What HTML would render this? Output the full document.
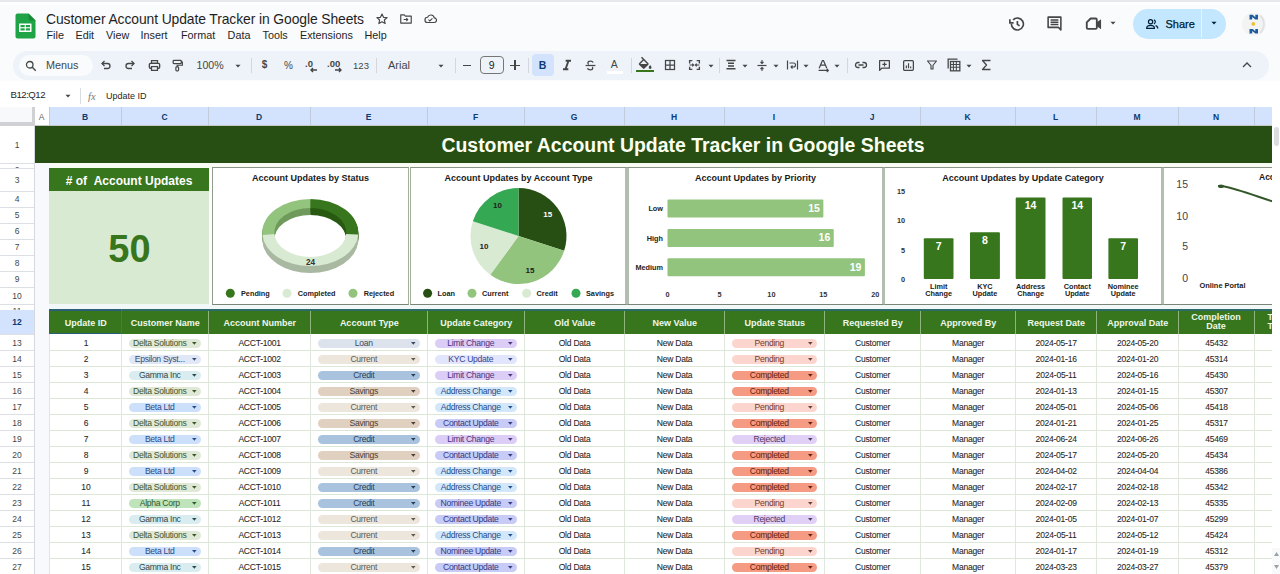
<!DOCTYPE html><html><head><meta charset="utf-8"><style>
html,body{margin:0;padding:0;}
body{width:1280px;height:574px;overflow:hidden;position:relative;background:#f9fbfd;font-family:"Liberation Sans", sans-serif;color:#1f1f1f;}
div{box-sizing:border-box;}
svg{position:absolute;overflow:visible;}
</style></head><body>

<div style="position:absolute;left:0px;top:0px;width:1280px;height:2px;background:#e6e8eb"></div>
<div style="position:absolute;left:0px;top:2px;width:1280px;height:3px;background:#fdfeff"></div>
<svg style="left:15px;top:13px" width="21" height="26" viewBox="0 0 21 26">
<path d="M2.5 0.5 H13.5 L20.5 7.5 V23.5 Q20.5 25.5 18.5 25.5 H2.5 Q0.5 25.5 0.5 23.5 V2.5 Q0.5 0.5 2.5 0.5Z" fill="#1ea446"/>
<path d="M13.5 0.5 L20.5 7.5 H15.5 Q13.5 7.5 13.5 5.5Z" fill="#178a39"/>
<rect x="4" y="10.5" width="12.5" height="8.5" fill="#fff" rx="0.5"/>
<rect x="5.5" y="12" width="4.2" height="2.2" fill="#1ea446"/><rect x="10.8" y="12" width="4.2" height="2.2" fill="#1ea446"/>
<rect x="5.5" y="15.3" width="4.2" height="2.2" fill="#1ea446"/><rect x="10.8" y="15.3" width="4.2" height="2.2" fill="#1ea446"/>
</svg>
<div style="position:absolute;left:46px;top:5.700000000000001px;height:27.8px;line-height:27.8px;white-space:nowrap;font-size:13.9px;color:#1f1f1f;letter-spacing:-0.1px">Customer Account Update Tracker in Google Sheets</div>
<svg style="left:375px;top:12px" width="14" height="14" viewBox="0 0 24 24"><path d="M12 3.5l2.6 5.6 6.1.6-4.6 4.1 1.3 6-5.4-3.1-5.4 3.1 1.3-6-4.6-4.1 6.1-.6z" fill="none" stroke="#444746" stroke-width="2" stroke-linejoin="round"/></svg>
<svg style="left:399px;top:12px" width="14" height="14" viewBox="0 0 24 24"><path d="M3 5h6l2 2h10v12H3z" fill="none" stroke="#444746" stroke-width="2" stroke-linejoin="round"/><path d="M8 13h7M12.5 10.5l2.5 2.5-2.5 2.5" fill="none" stroke="#444746" stroke-width="1.8"/></svg>
<svg style="left:423px;top:12px" width="15" height="14" viewBox="0 0 24 24"><path d="M7 18h11a4 4 0 0 0 0.5-8A6 6 0 0 0 7 9a4.5 4.5 0 0 0 0 9z" fill="none" stroke="#444746" stroke-width="2"/><path d="M8.5 13l2.3 2.3 4.5-4.5" fill="none" stroke="#444746" stroke-width="1.8"/></svg>
<div style="position:absolute;left:46.5px;top:25.2px;height:21.6px;line-height:21.6px;white-space:nowrap;font-size:10.8px;color:#1f1f1f">File</div>
<div style="position:absolute;left:75.5px;top:25.2px;height:21.6px;line-height:21.6px;white-space:nowrap;font-size:10.8px;color:#1f1f1f">Edit</div>
<div style="position:absolute;left:106px;top:25.2px;height:21.6px;line-height:21.6px;white-space:nowrap;font-size:10.8px;color:#1f1f1f">View</div>
<div style="position:absolute;left:140.6px;top:25.2px;height:21.6px;line-height:21.6px;white-space:nowrap;font-size:10.8px;color:#1f1f1f">Insert</div>
<div style="position:absolute;left:181px;top:25.2px;height:21.6px;line-height:21.6px;white-space:nowrap;font-size:10.8px;color:#1f1f1f">Format</div>
<div style="position:absolute;left:227.6px;top:25.2px;height:21.6px;line-height:21.6px;white-space:nowrap;font-size:10.8px;color:#1f1f1f">Data</div>
<div style="position:absolute;left:262.5px;top:25.2px;height:21.6px;line-height:21.6px;white-space:nowrap;font-size:10.8px;color:#1f1f1f">Tools</div>
<div style="position:absolute;left:300px;top:25.2px;height:21.6px;line-height:21.6px;white-space:nowrap;font-size:10.8px;color:#1f1f1f">Extensions</div>
<div style="position:absolute;left:364.5px;top:25.2px;height:21.6px;line-height:21.6px;white-space:nowrap;font-size:10.8px;color:#1f1f1f">Help</div>
<svg style="left:1008px;top:15px" width="18" height="18" viewBox="0 0 24 24"><path d="M4.5 12a8 8 0 1 0 2.3-5.6" fill="none" stroke="#444746" stroke-width="2.2"/><path d="M2.5 5.5v5h5" fill="none" stroke="#444746" stroke-width="2.2"/><path d="M12.5 8v4.5l3 2" fill="none" stroke="#444746" stroke-width="2.2"/></svg>
<svg style="left:1046px;top:15px" width="17" height="17" viewBox="0 0 24 24"><path d="M3 3h18v18l-3.5-3.5H3z" fill="none" stroke="#444746" stroke-width="2.2" stroke-linejoin="round"/><path d="M6.5 7h11M6.5 10.2h11M6.5 13.4h11" stroke="#444746" stroke-width="1.9"/></svg>
<svg style="left:1085px;top:15px" width="19" height="17" viewBox="0 0 24 22"><path d="M7 4.5h6.5a1.5 1.5 0 0 1 1.5 1.5v10.5a1.5 1.5 0 0 1-1.5 1.5H3.5A1.5 1.5 0 0 1 2 16.5V9.5z" fill="none" stroke="#444746" stroke-width="2.4" stroke-linejoin="round"/><path d="M15 9.5l5.5-4v13l-5.5-4z" fill="#444746"/></svg>
<svg style="left:1109px;top:21px" width="8" height="5" viewBox="-1 -0.5 10 6"><path d="M0.8 0.3h6.4L4 3.6z" fill="#444746"/></svg>
<div style="position:absolute;left:1133px;top:8.5px;width:93px;height:30px;background:#c2e7ff;border-radius:15px"></div>
<div style="position:absolute;left:1200.5px;top:9px;width:1px;height:29px;background:#e8f4fd"></div>
<svg style="left:1146.3px;top:18.5px" width="13" height="10" viewBox="1 1 23 18"><circle cx="9" cy="6" r="3.8" fill="none" stroke="#001d35" stroke-width="2.2"/><path d="M2 18c0-4 3.5-5.5 7-5.5s7 1.5 7 5.5z" fill="none" stroke="#001d35" stroke-width="2.2"/><path d="M15 2.5a3.8 3.8 0 0 1 0 7.2M18 12.8c2.5.6 4 2.2 4 5.2" fill="none" stroke="#001d35" stroke-width="2.2"/></svg>
<div style="position:absolute;left:1165.5px;top:12.5px;height:22px;line-height:22px;white-space:nowrap;font-size:11px;color:#001d35;-webkit-text-stroke:0.25px #001d35">Share</div>
<svg style="left:1210px;top:21px" width="8" height="5" viewBox="-1 -0.5 10 6"><path d="M0.8 0.3h6.4L4 3.6z" fill="#001d35"/></svg>
<svg style="left:1240px;top:10px" width="28" height="28" viewBox="0 0 28 28"><circle cx="14" cy="14.2" r="11.8" fill="#f3f3f3"/><path d="M20 5.5a11.8 11.8 0 0 1 0 17.4" fill="none" stroke="#e2e2e4" stroke-width="2"/>
<path d="M9.5,4.8 h3.2 l2.6,2.4 v-2.4 h2.7 v4.7 h-2.6 l-3.2,-2.6 v2.6 h-2.7z" fill="#1d5a9e"/>
<path d="M9.5,18.9 h3.2 l2.6,2.4 v-2.4 h2.7 v4.7 h-2.6 l-3.2,-2.6 v2.6 h-2.7z" fill="#1d5a9e"/>
<circle cx="13.3" cy="13.9" r="1.9" fill="#eac23a"/></svg>
<div style="position:absolute;left:12.5px;top:50.5px;width:1256px;height:29px;background:#eef3fa;border-radius:15px"></div>
<div style="position:absolute;left:18.5px;top:55px;width:74.5px;height:21px;background:#f9fbfd;border-radius:11px"></div>
<svg style="left:25px;top:59.5px" width="12" height="12" viewBox="0 0 24 24"><circle cx="9.5" cy="9.5" r="6.5" fill="none" stroke="#444746" stroke-width="2.6"/><path d="M14.5 14.5l7 7" stroke="#444746" stroke-width="2.8"/></svg>
<div style="position:absolute;left:46px;top:54.7px;height:21.6px;line-height:21.6px;white-space:nowrap;font-size:10.8px;color:#444746">Menus</div>
<svg style="left:100px;top:59px" width="12" height="12" viewBox="0 0 24 24"><path d="M5 9h10a5 5 0 0 1 0 10H8" fill="none" stroke="#444746" stroke-width="2.6"/><path d="M9 4L4 9l5 5" fill="none" stroke="#444746" stroke-width="2.6"/></svg>
<svg style="left:124px;top:59px" width="12" height="12" viewBox="0 0 24 24"><path d="M19 9H9a5 5 0 0 0 0 10h7" fill="none" stroke="#444746" stroke-width="2.6"/><path d="M15 4l5 5-5 5" fill="none" stroke="#444746" stroke-width="2.6"/></svg>
<svg style="left:147.5px;top:58.5px" width="13" height="13" viewBox="0 0 24 24"><rect x="2.5" y="8" width="19" height="9" rx="2" fill="none" stroke="#444746" stroke-width="2.5"/><rect x="6.5" y="3" width="11" height="5" fill="none" stroke="#444746" stroke-width="2.3"/><rect x="6.5" y="14" width="11" height="7" fill="#edf2fa" stroke="#444746" stroke-width="2.3"/></svg>
<svg style="left:171px;top:58.5px" width="13" height="13" viewBox="0 0 24 24"><rect x="4" y="2.5" width="15" height="6" rx="1.5" fill="none" stroke="#444746" stroke-width="2.4"/><path d="M19 5.5h2v6H11.5v3" fill="none" stroke="#444746" stroke-width="2.2"/><rect x="9" y="14.5" width="5" height="7.5" rx="1.5" fill="none" stroke="#444746" stroke-width="2.2"/></svg>
<div style="position:absolute;left:196.5px;top:54.9px;height:21.2px;line-height:21.2px;white-space:nowrap;font-size:10.6px;color:#444746">100%</div>
<svg style="left:233.5px;top:63.5px" width="8" height="5" viewBox="-1 -0.5 10 6"><path d="M0.8 0.3h6.4L4 3.6z" fill="#444746"/></svg>
<div style="position:absolute;left:250.5px;top:58px;width:1px;height:15px;background:#d3d6da"></div>
<div style="position:absolute;left:375.5px;top:58px;width:1px;height:15px;background:#d3d6da"></div>
<div style="position:absolute;left:455px;top:58px;width:1px;height:15px;background:#d3d6da"></div>
<div style="position:absolute;left:528px;top:58px;width:1px;height:15px;background:#d3d6da"></div>
<div style="position:absolute;left:630.5px;top:58px;width:1px;height:15px;background:#d3d6da"></div>
<div style="position:absolute;left:718.5px;top:58px;width:1px;height:15px;background:#d3d6da"></div>
<div style="position:absolute;left:846.5px;top:58px;width:1px;height:15px;background:#d3d6da"></div>
<div style="position:absolute;left:114.5px;top:55px;width:300px;height:20px;line-height:20px;text-align:center;white-space:nowrap;font-size:10px;color:#444746;font-weight:bold">$</div>
<div style="position:absolute;left:138.5px;top:55.5px;width:300px;height:20px;line-height:20px;text-align:center;white-space:nowrap;font-size:10px;color:#444746">%</div>
<svg style="left:304px;top:57px" width="16" height="16" viewBox="0 0 16 16"><text x="1" y="10" font-family="Liberation Sans" font-size="9.5" font-weight="bold" fill="#444746">.0</text><path d="M13 13H7M9 11l-2 2 2 2" fill="none" stroke="#444746" stroke-width="1.4"/></svg>
<svg style="left:327px;top:57px" width="18" height="16" viewBox="0 0 18 16"><text x="0" y="10" font-family="Liberation Sans" font-size="9.5" font-weight="bold" fill="#444746">.00</text><path d="M8 13h6M12 11l2 2-2 2" fill="none" stroke="#444746" stroke-width="1.4"/></svg>
<div style="position:absolute;left:211.0px;top:56.0px;width:300px;height:19.0px;line-height:19.0px;text-align:center;white-space:nowrap;font-size:9.5px;color:#444746">123</div>
<div style="position:absolute;left:388px;top:54px;height:22px;line-height:22px;white-space:nowrap;font-size:11px;color:#444746">Arial</div>
<svg style="left:437px;top:63.5px" width="8" height="5" viewBox="-1 -0.5 10 6"><path d="M0.8 0.3h6.4L4 3.6z" fill="#444746"/></svg>
<div style="position:absolute;left:463px;top:64.5px;width:8px;height:1.5px;background:#444746"></div>
<div style="position:absolute;left:479.5px;top:56px;width:24.5px;height:17.5px;border:1px solid #747775;border-radius:4px"></div>
<div style="position:absolute;left:341.75px;top:54.5px;width:300px;height:21.0px;line-height:21.0px;text-align:center;white-space:nowrap;font-size:10.5px;color:#1f1f1f">9</div>
<div style="position:absolute;left:510px;top:64.6px;width:10px;height:1.3px;background:#444746"></div>
<div style="position:absolute;left:514.35px;top:59.9px;width:1.3px;height:10px;background:#444746"></div>
<div style="position:absolute;left:531.5px;top:54px;width:22px;height:21.5px;background:#d3e3fd;border-radius:4px"></div>
<div style="position:absolute;left:392.5px;top:54.5px;width:300px;height:21.0px;line-height:21.0px;text-align:center;white-space:nowrap;font-size:10.5px;color:#0b3a78;font-weight:bold">B</div>
<svg style="left:560.5px;top:59px" width="12" height="12" viewBox="3 3 18 18"><path d="M10 4v3h2.21l-3.42 10H6v3h8v-3h-2.21l3.42-10H18V4z" fill="#444746"/></svg>
<svg style="left:583.5px;top:58.5px" width="13" height="13" viewBox="0 0 24 24"><path d="M17 6.5c-.8-1.6-2.5-2.5-5-2.5-3 0-4.8 1.5-4.8 3.4 0 1.2.6 2 1.6 2.6M15.2 14.5c.6.5.9 1.2.9 2 0 2-1.8 3.5-4.5 3.5-2.6 0-4.5-1-5.3-2.8" fill="none" stroke="#444746" stroke-width="2.3"/><path d="M3 12h18" stroke="#444746" stroke-width="2.3"/></svg>
<div style="position:absolute;left:464.29999999999995px;top:53.5px;width:300px;height:21.0px;line-height:21.0px;text-align:center;white-space:nowrap;font-size:10.5px;color:#444746">A</div>
<div style="position:absolute;left:606.5px;top:71px;width:16px;height:2.5px;background:#ffffff"></div>
<svg style="left:637.5px;top:55.5px" width="15" height="13" viewBox="2 -1 21 18"><path d="M16.56 8.94L7.62 0 6.21 1.41l2.38 2.38-5.15 5.15c-.59.59-.59 1.54 0 2.12l5.5 5.5c.29.29.68.44 1.06.44s.77-.15 1.06-.44l5.5-5.5c.59-.58.59-1.53 0-2.12zM5.21 10L10 5.21 14.79 10H5.21zM19 11.5s-2 2.17-2 3.5c0 1.1.9 2 2 2s2-.9 2-2c0-1.330-2-3.5-2-3.5z" fill="#444746"/></svg>
<div style="position:absolute;left:635.5px;top:69.5px;width:18px;height:2.5px;background:#38761d"></div>
<svg style="left:664px;top:59px" width="12" height="12" viewBox="0 0 24 24"><rect x="3" y="3" width="18" height="18" fill="none" stroke="#444746" stroke-width="2.5"/><path d="M12 3v18M3 12h18" stroke="#444746" stroke-width="2.5"/></svg>
<svg style="left:688px;top:59px" width="13" height="12" viewBox="0 0 24 22"><path d="M3 8V3h5M16 3h5v5M3 14v5h5M16 19h5v-5" fill="none" stroke="#444746" stroke-width="2.5"/><path d="M3 11h7M8 8.5l2.5 2.5L8 13.5M21 11h-7M16 8.5L13.5 11l2.5 2.5" fill="none" stroke="#444746" stroke-width="2"/></svg>
<svg style="left:707px;top:63.5px" width="8" height="5" viewBox="-1 -0.5 10 6"><path d="M0.8 0.3h6.4L4 3.6z" fill="#444746"/></svg>
<svg style="left:725px;top:59px" width="12" height="12" viewBox="0 0 24 24"><path d="M3 3h18M6 8.5h12M6 14h12M3 19.5h18" stroke="#444746" stroke-width="3"/></svg>
<svg style="left:741px;top:63.5px" width="8" height="5" viewBox="-1 -0.5 10 6"><path d="M0.8 0.3h6.4L4 3.6z" fill="#444746"/></svg>
<svg style="left:756px;top:58.5px" width="12" height="13" viewBox="0 0 24 26"><path d="M3 13h18" stroke="#444746" stroke-width="2.4"/><path d="M12 2v7M9 6l3 3 3-3M12 24v-7M9 20l3-3 3 3" fill="none" stroke="#444746" stroke-width="2.2"/></svg>
<svg style="left:772px;top:63.5px" width="8" height="5" viewBox="-1 -0.5 10 6"><path d="M0.8 0.3h6.4L4 3.6z" fill="#444746"/></svg>
<svg style="left:786px;top:59px" width="13" height="12" viewBox="0 0 26 24"><path d="M3 3v18M23 3v18" stroke="#444746" stroke-width="2.4"/><path d="M7 8h8a4 4 0 0 1 0 8h-4M13 13l-3 3 3 3" fill="none" stroke="#444746" stroke-width="2.2"/></svg>
<svg style="left:802px;top:63.5px" width="8" height="5" viewBox="-1 -0.5 10 6"><path d="M0.8 0.3h6.4L4 3.6z" fill="#444746"/></svg>
<svg style="left:817px;top:58.5px" width="13" height="13" viewBox="0 0 24 24"><path d="M4 17L10 3h2l6 14M6.5 11.5h9" fill="none" stroke="#444746" stroke-width="2.3"/><path d="M3 21h18M18 18l3 3-3 3" fill="none" stroke="#444746" stroke-width="2"/></svg>
<svg style="left:833px;top:63.5px" width="8" height="5" viewBox="-1 -0.5 10 6"><path d="M0.8 0.3h6.4L4 3.6z" fill="#444746"/></svg>
<svg style="left:853.5px;top:59px" width="14" height="12" viewBox="0 0 28 24"><path d="M11 7H8a5 5 0 0 0 0 10h3M17 7h3a5 5 0 0 1 0 10h-3M9 12h10" fill="none" stroke="#444746" stroke-width="2.6"/></svg>
<svg style="left:878px;top:58.5px" width="13" height="13" viewBox="0 0 24 24"><path d="M3 3h18v14H7l-4 4z" fill="none" stroke="#444746" stroke-width="2.3" stroke-linejoin="round"/><path d="M12 6v8M8 10h8" stroke="#444746" stroke-width="2.2"/></svg>
<svg style="left:901.5px;top:58.5px" width="13" height="13" viewBox="0 0 24 24"><rect x="3" y="3" width="18" height="18" rx="2" fill="none" stroke="#444746" stroke-width="2.3"/><path d="M8 17v-5M12 17V8M16 17v-3" stroke="#444746" stroke-width="2.2"/></svg>
<svg style="left:926px;top:59px" width="12" height="12" viewBox="0 0 24 24"><path d="M3 4h18l-7 8.5V20h-4v-7.5z" fill="none" stroke="#444746" stroke-width="2.3" stroke-linejoin="round"/></svg>
<svg style="left:947px;top:58px" width="14" height="14" viewBox="0 0 24 24"><rect x="6" y="6" width="16" height="16" fill="none" stroke="#444746" stroke-width="2.2"/><path d="M6 11h16M6 16h16M11 6v16M16 6v16" stroke="#444746" stroke-width="1.8"/><path d="M2 18V2h16" fill="none" stroke="#444746" stroke-width="2.2"/></svg>
<svg style="left:964.5px;top:63.5px" width="8" height="5" viewBox="-1 -0.5 10 6"><path d="M0.8 0.3h6.4L4 3.6z" fill="#444746"/></svg>
<svg style="left:981px;top:59px" width="11" height="12" viewBox="0 0 22 24"><path d="M19 3H3l8 9-8 9h16" fill="none" stroke="#444746" stroke-width="2.6" stroke-linejoin="round"/></svg>
<svg style="left:1242px;top:61px" width="10" height="7" viewBox="0 0 20 14"><path d="M2 12l8-8 8 8" fill="none" stroke="#444746" stroke-width="2.6"/></svg>
<div style="position:absolute;left:0px;top:81px;width:1280px;height:26px;background:#ffffff"></div>
<div style="position:absolute;left:10.6px;top:85.4px;height:19.2px;line-height:19.2px;white-space:nowrap;font-size:9.6px;color:#1f1f1f;letter-spacing:-0.5px">B12:Q12</div>
<svg style="left:63.5px;top:94px" width="8" height="5" viewBox="-1 -0.5 10 6"><path d="M0.8 0.3h6.4L4 3.6z" fill="#444746"/></svg>
<div style="position:absolute;left:79.5px;top:88px;width:1px;height:16px;background:#dadce0"></div>
<div style="position:absolute;left:88px;top:86.0px;height:21.0px;line-height:21.0px;white-space:nowrap;font-size:10.5px;color:#7a7a7a;font-family:'Liberation Serif'"><i>fx</i></div>
<div style="position:absolute;left:106px;top:87px;height:18px;line-height:18px;white-space:nowrap;font-size:9px;color:#1f1f1f">Update ID</div>
<div style="position:absolute;left:0px;top:107px;width:1272px;height:467px;background:#ffffff"></div>
<div style="position:absolute;left:0px;top:107px;width:1272px;height:19px;background:#ffffff"></div>
<div style="position:absolute;left:49px;top:107px;width:1223px;height:19px;background:#d3e3fd"></div>
<div style="position:absolute;left:34px;top:107px;width:15px;height:19px;background:#ffffff"></div>
<div style="position:absolute;left:-108.5px;top:108.5px;width:300px;height:17.0px;line-height:17.0px;text-align:center;white-space:nowrap;font-size:8.5px;color:#5f6368;font-weight:normal">A</div>
<div style="position:absolute;left:49px;top:107px;width:1px;height:19px;background:#c2cbdb"></div>
<div style="position:absolute;left:-65.0px;top:108.5px;width:300px;height:17.0px;line-height:17.0px;text-align:center;white-space:nowrap;font-size:8.5px;color:#0b3a6f;font-weight:bold">B</div>
<div style="position:absolute;left:121px;top:107px;width:1px;height:19px;background:#c2cbdb"></div>
<div style="position:absolute;left:14.5px;top:108.5px;width:300px;height:17.0px;line-height:17.0px;text-align:center;white-space:nowrap;font-size:8.5px;color:#0b3a6f;font-weight:bold">C</div>
<div style="position:absolute;left:208px;top:107px;width:1px;height:19px;background:#c2cbdb"></div>
<div style="position:absolute;left:109.0px;top:108.5px;width:300px;height:17.0px;line-height:17.0px;text-align:center;white-space:nowrap;font-size:8.5px;color:#0b3a6f;font-weight:bold">D</div>
<div style="position:absolute;left:310px;top:107px;width:1px;height:19px;background:#c2cbdb"></div>
<div style="position:absolute;left:218.5px;top:108.5px;width:300px;height:17.0px;line-height:17.0px;text-align:center;white-space:nowrap;font-size:8.5px;color:#0b3a6f;font-weight:bold">E</div>
<div style="position:absolute;left:427px;top:107px;width:1px;height:19px;background:#c2cbdb"></div>
<div style="position:absolute;left:325.5px;top:108.5px;width:300px;height:17.0px;line-height:17.0px;text-align:center;white-space:nowrap;font-size:8.5px;color:#0b3a6f;font-weight:bold">F</div>
<div style="position:absolute;left:524px;top:107px;width:1px;height:19px;background:#c2cbdb"></div>
<div style="position:absolute;left:424.0px;top:108.5px;width:300px;height:17.0px;line-height:17.0px;text-align:center;white-space:nowrap;font-size:8.5px;color:#0b3a6f;font-weight:bold">G</div>
<div style="position:absolute;left:624px;top:107px;width:1px;height:19px;background:#c2cbdb"></div>
<div style="position:absolute;left:524.0px;top:108.5px;width:300px;height:17.0px;line-height:17.0px;text-align:center;white-space:nowrap;font-size:8.5px;color:#0b3a6f;font-weight:bold">H</div>
<div style="position:absolute;left:724px;top:107px;width:1px;height:19px;background:#c2cbdb"></div>
<div style="position:absolute;left:624.0px;top:108.5px;width:300px;height:17.0px;line-height:17.0px;text-align:center;white-space:nowrap;font-size:8.5px;color:#0b3a6f;font-weight:bold">I</div>
<div style="position:absolute;left:824px;top:107px;width:1px;height:19px;background:#c2cbdb"></div>
<div style="position:absolute;left:722.0px;top:108.5px;width:300px;height:17.0px;line-height:17.0px;text-align:center;white-space:nowrap;font-size:8.5px;color:#0b3a6f;font-weight:bold">J</div>
<div style="position:absolute;left:920px;top:107px;width:1px;height:19px;background:#c2cbdb"></div>
<div style="position:absolute;left:817.5px;top:108.5px;width:300px;height:17.0px;line-height:17.0px;text-align:center;white-space:nowrap;font-size:8.5px;color:#0b3a6f;font-weight:bold">K</div>
<div style="position:absolute;left:1015px;top:107px;width:1px;height:19px;background:#c2cbdb"></div>
<div style="position:absolute;left:905.5px;top:108.5px;width:300px;height:17.0px;line-height:17.0px;text-align:center;white-space:nowrap;font-size:8.5px;color:#0b3a6f;font-weight:bold">L</div>
<div style="position:absolute;left:1096px;top:107px;width:1px;height:19px;background:#c2cbdb"></div>
<div style="position:absolute;left:987.0px;top:108.5px;width:300px;height:17.0px;line-height:17.0px;text-align:center;white-space:nowrap;font-size:8.5px;color:#0b3a6f;font-weight:bold">M</div>
<div style="position:absolute;left:1178px;top:107px;width:1px;height:19px;background:#c2cbdb"></div>
<div style="position:absolute;left:1066.0px;top:108.5px;width:300px;height:17.0px;line-height:17.0px;text-align:center;white-space:nowrap;font-size:8.5px;color:#0b3a6f;font-weight:bold">N</div>
<div style="position:absolute;left:1254px;top:107px;width:1px;height:19px;background:#c2cbdb"></div>
<div style="position:absolute;left:0px;top:125px;width:1272px;height:1px;background:#c4c7c5"></div>
<div style="position:absolute;left:0px;top:107px;width:34px;height:19px;background:#f8f9fa"></div>
<div style="position:absolute;left:31.5px;top:107px;width:3.5px;height:19px;background:#cfd1d4"></div>
<div style="position:absolute;left:0px;top:122px;width:35px;height:4px;background:#cfd1d4"></div>
<div style="position:absolute;left:0px;top:126px;width:34px;height:448px;background:#ffffff"></div>
<div style="position:absolute;left:0px;top:163px;width:34px;height:1px;background:#dcdfe3"></div>
<div style="position:absolute;left:-133.0px;top:136.8px;width:300px;height:17.0px;line-height:17.0px;text-align:center;white-space:nowrap;font-size:8.5px;color:#444746;font-weight:normal">1</div>
<div style="position:absolute;left:0px;top:168px;width:34px;height:1px;background:#dcdfe3"></div>
<div style="position:absolute;left:0;top:163px;width:34px;height:5px;overflow:hidden"><div style="position:absolute;left:-133.0px;top:-1.4000000000000004px;width:300px;height:17.0px;line-height:17.0px;text-align:center;white-space:nowrap;font-size:8.5px;color:#444746">2</div></div>
<div style="position:absolute;left:0px;top:191px;width:34px;height:1px;background:#dcdfe3"></div>
<div style="position:absolute;left:-133.0px;top:171.8px;width:300px;height:17.0px;line-height:17.0px;text-align:center;white-space:nowrap;font-size:8.5px;color:#444746;font-weight:normal">3</div>
<div style="position:absolute;left:0px;top:207px;width:34px;height:1px;background:#dcdfe3"></div>
<div style="position:absolute;left:-133.0px;top:191.3px;width:300px;height:17.0px;line-height:17.0px;text-align:center;white-space:nowrap;font-size:8.5px;color:#444746;font-weight:normal">4</div>
<div style="position:absolute;left:0px;top:223px;width:34px;height:1px;background:#dcdfe3"></div>
<div style="position:absolute;left:-133.0px;top:207.3px;width:300px;height:17.0px;line-height:17.0px;text-align:center;white-space:nowrap;font-size:8.5px;color:#444746;font-weight:normal">5</div>
<div style="position:absolute;left:0px;top:239px;width:34px;height:1px;background:#dcdfe3"></div>
<div style="position:absolute;left:-133.0px;top:223.3px;width:300px;height:17.0px;line-height:17.0px;text-align:center;white-space:nowrap;font-size:8.5px;color:#444746;font-weight:normal">6</div>
<div style="position:absolute;left:0px;top:255px;width:34px;height:1px;background:#dcdfe3"></div>
<div style="position:absolute;left:-133.0px;top:239.3px;width:300px;height:17.0px;line-height:17.0px;text-align:center;white-space:nowrap;font-size:8.5px;color:#444746;font-weight:normal">7</div>
<div style="position:absolute;left:0px;top:271px;width:34px;height:1px;background:#dcdfe3"></div>
<div style="position:absolute;left:-133.0px;top:255.3px;width:300px;height:17.0px;line-height:17.0px;text-align:center;white-space:nowrap;font-size:8.5px;color:#444746;font-weight:normal">8</div>
<div style="position:absolute;left:0px;top:287px;width:34px;height:1px;background:#dcdfe3"></div>
<div style="position:absolute;left:-133.0px;top:271.3px;width:300px;height:17.0px;line-height:17.0px;text-align:center;white-space:nowrap;font-size:8.5px;color:#444746;font-weight:normal">9</div>
<div style="position:absolute;left:0px;top:304px;width:34px;height:1px;background:#dcdfe3"></div>
<div style="position:absolute;left:-133.0px;top:287.8px;width:300px;height:17.0px;line-height:17.0px;text-align:center;white-space:nowrap;font-size:8.5px;color:#444746;font-weight:normal">10</div>
<div style="position:absolute;left:0px;top:310px;width:34px;height:1px;background:#dcdfe3"></div>
<div style="position:absolute;left:0;top:304px;width:34px;height:6px;overflow:hidden"><div style="position:absolute;left:-133.0px;top:-0.9000000000000004px;width:300px;height:17.0px;line-height:17.0px;text-align:center;white-space:nowrap;font-size:8.5px;color:#444746">11</div></div>
<div style="position:absolute;left:0px;top:310px;width:34px;height:24px;background:#d3e3fd"></div>
<div style="position:absolute;left:0px;top:334px;width:34px;height:1px;background:#dcdfe3"></div>
<div style="position:absolute;left:-133.0px;top:314.3px;width:300px;height:17.0px;line-height:17.0px;text-align:center;white-space:nowrap;font-size:8.5px;color:#0b3a6f;font-weight:bold">12</div>
<div style="position:absolute;left:0px;top:350px;width:34px;height:1px;background:#dcdfe3"></div>
<div style="position:absolute;left:-133.0px;top:335.1px;width:300px;height:17.0px;line-height:17.0px;text-align:center;white-space:nowrap;font-size:8.5px;color:#444746;font-weight:normal">13</div>
<div style="position:absolute;left:0px;top:366px;width:34px;height:1px;background:#dcdfe3"></div>
<div style="position:absolute;left:-133.0px;top:351.1px;width:300px;height:17.0px;line-height:17.0px;text-align:center;white-space:nowrap;font-size:8.5px;color:#444746;font-weight:normal">14</div>
<div style="position:absolute;left:0px;top:382px;width:34px;height:1px;background:#dcdfe3"></div>
<div style="position:absolute;left:-133.0px;top:367.1px;width:300px;height:17.0px;line-height:17.0px;text-align:center;white-space:nowrap;font-size:8.5px;color:#444746;font-weight:normal">15</div>
<div style="position:absolute;left:0px;top:398px;width:34px;height:1px;background:#dcdfe3"></div>
<div style="position:absolute;left:-133.0px;top:383.1px;width:300px;height:17.0px;line-height:17.0px;text-align:center;white-space:nowrap;font-size:8.5px;color:#444746;font-weight:normal">16</div>
<div style="position:absolute;left:0px;top:414px;width:34px;height:1px;background:#dcdfe3"></div>
<div style="position:absolute;left:-133.0px;top:399.1px;width:300px;height:17.0px;line-height:17.0px;text-align:center;white-space:nowrap;font-size:8.5px;color:#444746;font-weight:normal">17</div>
<div style="position:absolute;left:0px;top:430px;width:34px;height:1px;background:#dcdfe3"></div>
<div style="position:absolute;left:-133.0px;top:415.1px;width:300px;height:17.0px;line-height:17.0px;text-align:center;white-space:nowrap;font-size:8.5px;color:#444746;font-weight:normal">18</div>
<div style="position:absolute;left:0px;top:446px;width:34px;height:1px;background:#dcdfe3"></div>
<div style="position:absolute;left:-133.0px;top:431.1px;width:300px;height:17.0px;line-height:17.0px;text-align:center;white-space:nowrap;font-size:8.5px;color:#444746;font-weight:normal">19</div>
<div style="position:absolute;left:0px;top:462px;width:34px;height:1px;background:#dcdfe3"></div>
<div style="position:absolute;left:-133.0px;top:447.1px;width:300px;height:17.0px;line-height:17.0px;text-align:center;white-space:nowrap;font-size:8.5px;color:#444746;font-weight:normal">20</div>
<div style="position:absolute;left:0px;top:478px;width:34px;height:1px;background:#dcdfe3"></div>
<div style="position:absolute;left:-133.0px;top:463.1px;width:300px;height:17.0px;line-height:17.0px;text-align:center;white-space:nowrap;font-size:8.5px;color:#444746;font-weight:normal">21</div>
<div style="position:absolute;left:0px;top:494px;width:34px;height:1px;background:#dcdfe3"></div>
<div style="position:absolute;left:-133.0px;top:479.1px;width:300px;height:17.0px;line-height:17.0px;text-align:center;white-space:nowrap;font-size:8.5px;color:#444746;font-weight:normal">22</div>
<div style="position:absolute;left:0px;top:510px;width:34px;height:1px;background:#dcdfe3"></div>
<div style="position:absolute;left:-133.0px;top:495.1px;width:300px;height:17.0px;line-height:17.0px;text-align:center;white-space:nowrap;font-size:8.5px;color:#444746;font-weight:normal">23</div>
<div style="position:absolute;left:0px;top:526px;width:34px;height:1px;background:#dcdfe3"></div>
<div style="position:absolute;left:-133.0px;top:511.1px;width:300px;height:17.0px;line-height:17.0px;text-align:center;white-space:nowrap;font-size:8.5px;color:#444746;font-weight:normal">24</div>
<div style="position:absolute;left:0px;top:542px;width:34px;height:1px;background:#dcdfe3"></div>
<div style="position:absolute;left:-133.0px;top:527.1px;width:300px;height:17.0px;line-height:17.0px;text-align:center;white-space:nowrap;font-size:8.5px;color:#444746;font-weight:normal">25</div>
<div style="position:absolute;left:0px;top:558px;width:34px;height:1px;background:#dcdfe3"></div>
<div style="position:absolute;left:-133.0px;top:543.1px;width:300px;height:17.0px;line-height:17.0px;text-align:center;white-space:nowrap;font-size:8.5px;color:#444746;font-weight:normal">26</div>
<div style="position:absolute;left:0px;top:574px;width:34px;height:1px;background:#dcdfe3"></div>
<div style="position:absolute;left:-133.0px;top:559.1px;width:300px;height:17.0px;line-height:17.0px;text-align:center;white-space:nowrap;font-size:8.5px;color:#444746;font-weight:normal">27</div>
<div style="position:absolute;left:34px;top:126px;width:1px;height:448px;background:#d5d8dc"></div>
<div style="position:absolute;left:35px;top:126px;width:14px;height:448px;background:#f7f9fc"></div>
<div style="position:absolute;left:35px;top:126px;width:1237px;height:37px;background:#274e13"></div>
<div style="position:absolute;left:333.0px;top:126.05px;width:700px;height:38.9px;line-height:38.9px;text-align:center;white-space:nowrap;font-size:19.45px;color:#fbfff2;font-weight:bold">Customer Account Update Tracker in Google Sheets</div>
<div style="position:absolute;left:49px;top:163px;width:1223px;height:5px;background:#f9fcf5"></div>
<div style="position:absolute;left:49px;top:303px;width:1223px;height:7px;background:#f1f8f7"></div>
<div style="position:absolute;left:49px;top:168px;width:160px;height:23px;background:#38761d"></div>
<div style="position:absolute;left:-21.0px;top:168.8px;width:300px;height:24px;line-height:24px;text-align:center;white-space:nowrap;font-size:12px;color:#ffffff;font-weight:bold"># of &nbsp;Account Updates</div>
<div style="position:absolute;left:49px;top:191px;width:160px;height:112.5px;background:#d9ead3"></div>
<div style="position:absolute;left:-20.5px;top:211px;width:300px;height:76px;line-height:76px;text-align:center;white-space:nowrap;font-size:38px;color:#38761d;font-weight:bold">50</div>
<div style="position:absolute;left:209px;top:168px;width:1063px;height:136.5px;background:#ffffff"></div>
<div style="position:absolute;left:212px;top:167px;width:196.5px;height:138px;background:#ffffff;border-top:1px solid #8c9288;border-bottom:1px solid #7d8579;border-left:1.3px solid #8f9b8c;border-right:1px solid #a3b09e"></div>
<div style="position:absolute;left:410px;top:167px;width:217px;height:138px;background:#ffffff;border-top:1px solid #8c9288;border-bottom:1px solid #7d8579;border-left:1px solid #a3b09e;border-right:1px solid #a3b09e"></div>
<div style="position:absolute;left:627px;top:167px;width:256.5px;height:138px;background:#ffffff;border-top:1px solid #8c9288;border-bottom:1px solid #7d8579;border-left:1px solid #a3b09e;border-right:1px solid #a3b09e"></div>
<div style="position:absolute;left:883.5px;top:167px;width:279.0px;height:138px;background:#ffffff;border-top:1px solid #8c9288;border-bottom:1px solid #7d8579;border-left:1px solid #a3b09e;border-right:1px solid #a3b09e"></div>
<div style="position:absolute;left:1162.5px;top:167px;width:127.5px;height:138px;background:#ffffff;border-top:1px solid #8c9288;border-bottom:1px solid #7d8579;border-left:1px solid #a3b09e;border-right:1px solid #a3b09e"></div>
<div style="position:absolute;left:408.5px;top:163px;width:1.5px;height:142px;background:#fbfdf8"></div>
<div style="position:absolute;left:625px;top:168px;width:4px;height:136px;background:#b3bfae"></div>
<div style="position:absolute;left:882px;top:168px;width:3.2999999999999545px;height:136px;background:#b3bfae"></div>
<div style="position:absolute;left:1161px;top:168px;width:3px;height:136px;background:#b3bfae"></div>
<svg style="left:0;top:0" width="1280" height="574" viewBox="0 0 1280 574"><path d="M310.30,206.00 A48,33.5 0 0 1 358.21,241.60 L346.23,241.04 A36,24.5 0 0 0 310.30,215.00 Z" fill="#285a12"/><path d="M358.21,241.60 A48,33.5 0 0 1 262.39,241.60 L274.37,241.04 A36,24.5 0 0 0 346.23,241.04 Z" fill="#a9b9a2"/><path d="M262.39,241.60 A48,33.5 0 0 1 310.30,206.00 L310.30,215.00 A36,24.5 0 0 0 274.37,241.04 Z" fill="#6f9a5c"/><path d="M310.30,205.00 A48,33.5 0 0 1 358.21,240.60 L346.23,240.04 A36,24.5 0 0 0 310.30,214.00 Z" fill="#285a12"/><path d="M358.21,240.60 A48,33.5 0 0 1 262.39,240.60 L274.37,240.04 A36,24.5 0 0 0 346.23,240.04 Z" fill="#a9b9a2"/><path d="M262.39,240.60 A48,33.5 0 0 1 310.30,205.00 L310.30,214.00 A36,24.5 0 0 0 274.37,240.04 Z" fill="#6f9a5c"/><path d="M310.30,204.00 A48,33.5 0 0 1 358.21,239.60 L346.23,239.04 A36,24.5 0 0 0 310.30,213.00 Z" fill="#285a12"/><path d="M358.21,239.60 A48,33.5 0 0 1 262.39,239.60 L274.37,239.04 A36,24.5 0 0 0 346.23,239.04 Z" fill="#a9b9a2"/><path d="M262.39,239.60 A48,33.5 0 0 1 310.30,204.00 L310.30,213.00 A36,24.5 0 0 0 274.37,239.04 Z" fill="#6f9a5c"/><path d="M310.30,203.00 A48,33.5 0 0 1 358.21,238.60 L346.23,238.04 A36,24.5 0 0 0 310.30,212.00 Z" fill="#285a12"/><path d="M358.21,238.60 A48,33.5 0 0 1 262.39,238.60 L274.37,238.04 A36,24.5 0 0 0 346.23,238.04 Z" fill="#a9b9a2"/><path d="M262.39,238.60 A48,33.5 0 0 1 310.30,203.00 L310.30,212.00 A36,24.5 0 0 0 274.37,238.04 Z" fill="#6f9a5c"/><path d="M310.30,202.00 A48,33.5 0 0 1 358.21,237.60 L346.23,237.04 A36,24.5 0 0 0 310.30,211.00 Z" fill="#285a12"/><path d="M358.21,237.60 A48,33.5 0 0 1 262.39,237.60 L274.37,237.04 A36,24.5 0 0 0 346.23,237.04 Z" fill="#a9b9a2"/><path d="M262.39,237.60 A48,33.5 0 0 1 310.30,202.00 L310.30,211.00 A36,24.5 0 0 0 274.37,237.04 Z" fill="#6f9a5c"/><path d="M310.30,201.00 A48,33.5 0 0 1 358.21,236.60 L346.23,236.04 A36,24.5 0 0 0 310.30,210.00 Z" fill="#285a12"/><path d="M358.21,236.60 A48,33.5 0 0 1 262.39,236.60 L274.37,236.04 A36,24.5 0 0 0 346.23,236.04 Z" fill="#a9b9a2"/><path d="M262.39,236.60 A48,33.5 0 0 1 310.30,201.00 L310.30,210.00 A36,24.5 0 0 0 274.37,236.04 Z" fill="#6f9a5c"/><path d="M310.30,200.00 A48,33.5 0 0 1 358.21,235.60 L346.23,235.04 A36,24.5 0 0 0 310.30,209.00 Z" fill="#285a12"/><path d="M358.21,235.60 A48,33.5 0 0 1 262.39,235.60 L274.37,235.04 A36,24.5 0 0 0 346.23,235.04 Z" fill="#a9b9a2"/><path d="M262.39,235.60 A48,33.5 0 0 1 310.30,200.00 L310.30,209.00 A36,24.5 0 0 0 274.37,235.04 Z" fill="#6f9a5c"/><path d="M310.30,199.00 A48,33.5 0 0 1 358.21,234.60 L346.23,234.04 A36,24.5 0 0 0 310.30,208.00 Z" fill="#38761d"/><path d="M358.21,234.60 A48,33.5 0 0 1 262.39,234.60 L274.37,234.04 A36,24.5 0 0 0 346.23,234.04 Z" fill="#d9ead3"/><path d="M262.39,234.60 A48,33.5 0 0 1 310.30,199.00 L310.30,208.00 A36,24.5 0 0 0 274.37,234.04 Z" fill="#93c47d"/><text x="310.5" y="264.5" font-family="Liberation Sans" font-size="8.2" font-weight="bold" fill="#333" text-anchor="middle" >24</text><text x="310.5" y="181.3" font-family="Liberation Sans" font-size="9" font-weight="bold" fill="#1a1a1a" text-anchor="middle" >Account Updates by Status</text><circle cx="230.3" cy="293.3" r="4.5" fill="#38761d"/><text x="241.0" y="295.7" font-family="Liberation Sans" font-size="7.3" font-weight="bold" fill="#222" text-anchor="start" >Pending</text><circle cx="287" cy="293.3" r="4.5" fill="#d9ead3"/><text x="297.7" y="295.7" font-family="Liberation Sans" font-size="7.3" font-weight="bold" fill="#222" text-anchor="start" >Completed</text><circle cx="353" cy="293.3" r="4.5" fill="#93c47d"/><text x="363.7" y="295.7" font-family="Liberation Sans" font-size="7.3" font-weight="bold" fill="#222" text-anchor="start" >Rejected</text><path d="M518.5,236 L518.50,188.00 A48,48 0 0 1 564.15,250.83 Z" fill="#274e13"/><path d="M518.5,236 L564.15,250.83 A48,48 0 0 1 490.29,274.83 Z" fill="#93c47d"/><path d="M518.5,236 L490.29,274.83 A48,48 0 0 1 472.85,221.17 Z" fill="#d9ead3"/><path d="M518.5,236 L472.85,221.17 A48,48 0 0 1 518.50,188.00 Z" fill="#34a853"/><text x="547.8" y="217.2" font-family="Liberation Sans" font-size="8" font-weight="bold" fill="#ffffff" text-anchor="middle" >15</text><text x="530" y="273.2" font-family="Liberation Sans" font-size="8" font-weight="bold" fill="#222" text-anchor="middle" >15</text><text x="484" y="249.4" font-family="Liberation Sans" font-size="8" font-weight="bold" fill="#222" text-anchor="middle" >10</text><text x="497.5" y="208.4" font-family="Liberation Sans" font-size="8" font-weight="bold" fill="#222" text-anchor="middle" >10</text><text x="518.5" y="181.3" font-family="Liberation Sans" font-size="9" font-weight="bold" fill="#1a1a1a" text-anchor="middle" >Account Updates by Account Type</text><circle cx="427.6" cy="293.3" r="4.5" fill="#274e13"/><text x="437.6" y="295.7" font-family="Liberation Sans" font-size="7.3" font-weight="bold" fill="#222" text-anchor="start" >Loan</text><circle cx="472" cy="293.3" r="4.5" fill="#93c47d"/><text x="482" y="295.7" font-family="Liberation Sans" font-size="7.3" font-weight="bold" fill="#222" text-anchor="start" >Current</text><circle cx="526.6" cy="293.3" r="4.5" fill="#d9ead3"/><text x="536.6" y="295.7" font-family="Liberation Sans" font-size="7.3" font-weight="bold" fill="#222" text-anchor="start" >Credit</text><circle cx="576" cy="293.3" r="4.5" fill="#34a853"/><text x="586" y="295.7" font-family="Liberation Sans" font-size="7.3" font-weight="bold" fill="#222" text-anchor="start" >Savings</text><text x="755.5" y="181.3" font-family="Liberation Sans" font-size="9" font-weight="bold" fill="#1a1a1a" text-anchor="middle" >Account Updates by Priority</text><rect x="667.5" y="199.5" width="155.85" height="18" rx="1" fill="#93c47d"/><text x="819.85" y="211.7" font-family="Liberation Sans" font-size="10.5" font-weight="bold" fill="#ffffff" text-anchor="end" >15</text><text x="663" y="211.2" font-family="Liberation Sans" font-size="7.3" font-weight="bold" fill="#222" text-anchor="end" >Low</text><rect x="667.5" y="229" width="166.24" height="18" rx="1" fill="#93c47d"/><text x="830.24" y="241.2" font-family="Liberation Sans" font-size="10.5" font-weight="bold" fill="#ffffff" text-anchor="end" >16</text><text x="663" y="240.7" font-family="Liberation Sans" font-size="7.3" font-weight="bold" fill="#222" text-anchor="end" >High</text><rect x="667.5" y="258.3" width="197.41" height="18" rx="1" fill="#93c47d"/><text x="861.4100000000001" y="270.5" font-family="Liberation Sans" font-size="10.5" font-weight="bold" fill="#ffffff" text-anchor="end" >19</text><text x="663" y="270.0" font-family="Liberation Sans" font-size="7.3" font-weight="bold" fill="#222" text-anchor="end" >Medium</text><text x="667.5" y="296.5" font-family="Liberation Sans" font-size="7.3" font-weight="bold" fill="#333" text-anchor="middle" >0</text><text x="719.45" y="296.5" font-family="Liberation Sans" font-size="7.3" font-weight="bold" fill="#333" text-anchor="middle" >5</text><text x="771.4" y="296.5" font-family="Liberation Sans" font-size="7.3" font-weight="bold" fill="#333" text-anchor="middle" >10</text><text x="823.35" y="296.5" font-family="Liberation Sans" font-size="7.3" font-weight="bold" fill="#333" text-anchor="middle" >15</text><text x="875.3" y="296.5" font-family="Liberation Sans" font-size="7.3" font-weight="bold" fill="#333" text-anchor="middle" >20</text><text x="1023" y="181.3" font-family="Liberation Sans" font-size="9" font-weight="bold" fill="#1a1a1a" text-anchor="middle" >Account Updates by Update Category</text><rect x="923.8" y="238.19" width="29.70" height="40.81" rx="1" fill="#38761d"/><text x="938.65" y="249.79" font-family="Liberation Sans" font-size="10.5" font-weight="bold" fill="#ffffff" text-anchor="middle" >7</text><text x="938.65" y="288.8" font-family="Liberation Sans" font-size="7.3" font-weight="bold" fill="#222" text-anchor="middle" >Limit</text><text x="938.65" y="296.3" font-family="Liberation Sans" font-size="7.3" font-weight="bold" fill="#222" text-anchor="middle" >Change</text><rect x="970" y="232.36" width="29.90" height="46.64" rx="1" fill="#38761d"/><text x="984.95" y="243.96" font-family="Liberation Sans" font-size="10.5" font-weight="bold" fill="#ffffff" text-anchor="middle" >8</text><text x="984.95" y="288.8" font-family="Liberation Sans" font-size="7.3" font-weight="bold" fill="#222" text-anchor="middle" >KYC</text><text x="984.95" y="296.3" font-family="Liberation Sans" font-size="7.3" font-weight="bold" fill="#222" text-anchor="middle" >Update</text><rect x="1015.7" y="197.38" width="29.80" height="81.62" rx="1" fill="#38761d"/><text x="1030.6" y="208.98" font-family="Liberation Sans" font-size="10.5" font-weight="bold" fill="#ffffff" text-anchor="middle" >14</text><text x="1030.6" y="288.8" font-family="Liberation Sans" font-size="7.3" font-weight="bold" fill="#222" text-anchor="middle" >Address</text><text x="1030.6" y="296.3" font-family="Liberation Sans" font-size="7.3" font-weight="bold" fill="#222" text-anchor="middle" >Change</text><rect x="1062.5" y="197.38" width="29.50" height="81.62" rx="1" fill="#38761d"/><text x="1077.25" y="208.98" font-family="Liberation Sans" font-size="10.5" font-weight="bold" fill="#ffffff" text-anchor="middle" >14</text><text x="1077.25" y="288.8" font-family="Liberation Sans" font-size="7.3" font-weight="bold" fill="#222" text-anchor="middle" >Contact</text><text x="1077.25" y="296.3" font-family="Liberation Sans" font-size="7.3" font-weight="bold" fill="#222" text-anchor="middle" >Update</text><rect x="1108.4" y="238.19" width="29.60" height="40.81" rx="1" fill="#38761d"/><text x="1123.2" y="249.79" font-family="Liberation Sans" font-size="10.5" font-weight="bold" fill="#ffffff" text-anchor="middle" >7</text><text x="1123.2" y="288.8" font-family="Liberation Sans" font-size="7.3" font-weight="bold" fill="#222" text-anchor="middle" >Nominee</text><text x="1123.2" y="296.3" font-family="Liberation Sans" font-size="7.3" font-weight="bold" fill="#222" text-anchor="middle" >Update</text><text x="905" y="281.7" font-family="Liberation Sans" font-size="7.3" font-weight="bold" fill="#333" text-anchor="end" >0</text><text x="905" y="252.54999999999998" font-family="Liberation Sans" font-size="7.3" font-weight="bold" fill="#333" text-anchor="end" >5</text><text x="905" y="223.39999999999998" font-family="Liberation Sans" font-size="7.3" font-weight="bold" fill="#333" text-anchor="end" >10</text><text x="905" y="194.25" font-family="Liberation Sans" font-size="7.3" font-weight="bold" fill="#333" text-anchor="end" >15</text><text x="1188" y="188.10000000000002" font-family="Liberation Sans" font-size="10.5" font-weight="normal" fill="#444" text-anchor="end" >15</text><text x="1188" y="219.8" font-family="Liberation Sans" font-size="10.5" font-weight="normal" fill="#444" text-anchor="end" >10</text><text x="1188" y="250.3" font-family="Liberation Sans" font-size="10.5" font-weight="normal" fill="#444" text-anchor="end" >5</text><text x="1188" y="281.5" font-family="Liberation Sans" font-size="10.5" font-weight="normal" fill="#444" text-anchor="end" >0</text><text x="1222.5" y="288.2" font-family="Liberation Sans" font-size="7.4" font-weight="bold" fill="#222" text-anchor="middle" >Online Portal</text><path d="M1218,186 L1223,186.3 C1238,189 1255,196 1290,207" fill="none" stroke="#34572a" stroke-width="2"/><ellipse cx="1221" cy="186.3" rx="3" ry="1.8" fill="#34572a"/><text x="1259" y="179.5" font-family="Liberation Sans" font-size="8.5" font-weight="bold" fill="#1a1a1a" text-anchor="start" >Acc</text></svg>
<div style="position:absolute;left:1272px;top:107px;width:8px;height:467px;background:#ffffff"></div>
<div style="position:absolute;left:1273.5px;top:127px;width:5px;height:19px;background:#dadce0;border-radius:3px"></div>
<div style="position:absolute;left:49px;top:310px;width:1223px;height:24px;background:#38761d"></div>
<div style="position:absolute;left:49.8px;top:313.8px;width:72px;height:18px;line-height:18px;text-align:center;white-space:nowrap;font-size:9px;color:#eef7ea;font-weight:bold">Update ID</div>
<div style="position:absolute;left:121px;top:310px;width:1px;height:24px;background:#8fb47e"></div>
<div style="position:absolute;left:121.80000000000001px;top:313.8px;width:87px;height:18px;line-height:18px;text-align:center;white-space:nowrap;font-size:9px;color:#eef7ea;font-weight:bold">Customer Name</div>
<div style="position:absolute;left:208px;top:310px;width:1px;height:24px;background:#8fb47e"></div>
<div style="position:absolute;left:208.8px;top:313.8px;width:102px;height:18px;line-height:18px;text-align:center;white-space:nowrap;font-size:9px;color:#eef7ea;font-weight:bold">Account Number</div>
<div style="position:absolute;left:310px;top:310px;width:1px;height:24px;background:#8fb47e"></div>
<div style="position:absolute;left:310.8px;top:313.8px;width:117px;height:18px;line-height:18px;text-align:center;white-space:nowrap;font-size:9px;color:#eef7ea;font-weight:bold">Account Type</div>
<div style="position:absolute;left:427px;top:310px;width:1px;height:24px;background:#8fb47e"></div>
<div style="position:absolute;left:427.8px;top:313.8px;width:97px;height:18px;line-height:18px;text-align:center;white-space:nowrap;font-size:9px;color:#eef7ea;font-weight:bold">Update Category</div>
<div style="position:absolute;left:524px;top:310px;width:1px;height:24px;background:#8fb47e"></div>
<div style="position:absolute;left:524.8px;top:313.8px;width:100px;height:18px;line-height:18px;text-align:center;white-space:nowrap;font-size:9px;color:#eef7ea;font-weight:bold">Old Value</div>
<div style="position:absolute;left:624px;top:310px;width:1px;height:24px;background:#8fb47e"></div>
<div style="position:absolute;left:624.8px;top:313.8px;width:100px;height:18px;line-height:18px;text-align:center;white-space:nowrap;font-size:9px;color:#eef7ea;font-weight:bold">New Value</div>
<div style="position:absolute;left:724px;top:310px;width:1px;height:24px;background:#8fb47e"></div>
<div style="position:absolute;left:724.8px;top:313.8px;width:100px;height:18px;line-height:18px;text-align:center;white-space:nowrap;font-size:9px;color:#eef7ea;font-weight:bold">Update Status</div>
<div style="position:absolute;left:824px;top:310px;width:1px;height:24px;background:#8fb47e"></div>
<div style="position:absolute;left:824.8px;top:313.8px;width:96px;height:18px;line-height:18px;text-align:center;white-space:nowrap;font-size:9px;color:#eef7ea;font-weight:bold">Requested By</div>
<div style="position:absolute;left:920px;top:310px;width:1px;height:24px;background:#8fb47e"></div>
<div style="position:absolute;left:920.8px;top:313.8px;width:95px;height:18px;line-height:18px;text-align:center;white-space:nowrap;font-size:9px;color:#eef7ea;font-weight:bold">Approved By</div>
<div style="position:absolute;left:1015px;top:310px;width:1px;height:24px;background:#8fb47e"></div>
<div style="position:absolute;left:1015.8px;top:313.8px;width:81px;height:18px;line-height:18px;text-align:center;white-space:nowrap;font-size:9px;color:#eef7ea;font-weight:bold">Request Date</div>
<div style="position:absolute;left:1096px;top:310px;width:1px;height:24px;background:#8fb47e"></div>
<div style="position:absolute;left:1096.8px;top:313.8px;width:82px;height:18px;line-height:18px;text-align:center;white-space:nowrap;font-size:9px;color:#eef7ea;font-weight:bold">Approval Date</div>
<div style="position:absolute;left:1178px;top:310px;width:1px;height:24px;background:#8fb47e"></div>
<div style="position:absolute;left:1178px;top:312.5px;width:76px;text-align:center;font-size:9px;line-height:9.8px;font-weight:bold;color:#eef7ea">Completion<br>Date</div>
<div style="position:absolute;left:1254px;top:310px;width:1px;height:24px;background:#8fb47e"></div>
<div style="position:absolute;left:1267.5px;top:312.5px;width:20px;font-size:9px;line-height:9.8px;font-weight:bold;color:#eef7ea">T<br>T</div>
<div style="position:absolute;left:49px;top:309px;width:1223px;height:1.5px;background:#2f6a6a"></div>
<div style="position:absolute;left:49px;top:309px;width:72px;height:1.5px;background:#2a5f78"></div>
<div style="position:absolute;left:49px;top:332.5px;width:72px;height:1.5px;background:#2a5f78"></div>
<div style="position:absolute;left:49px;top:309px;width:1px;height:25px;background:#2f6660"></div>
<div style="position:absolute;left:120.5px;top:309px;width:1px;height:25px;background:#3a70a0"></div>
<div style="position:absolute;left:-64.0px;top:334.8px;width:300px;height:17.0px;line-height:17.0px;text-align:center;white-space:nowrap;font-size:8.5px;color:#1e1e1e;-webkit-text-stroke:0.08px #333">1</div>
<div style="position:absolute;left:128.5px;top:338.8px;width:72.5px;height:9px;border-radius:4.5px;background:#e0e9d6"></div><div style="position:absolute;left:123.5px;top:334.7px;width:72.5px;height:17.2px;line-height:17.2px;text-align:center;white-space:nowrap;font-size:8.6px;color:#3e5530;letter-spacing:-0.3px">Delta Solutions</div><svg style="left:192px;top:342.0px" width="4.6" height="2.8" viewBox="0 0 5 3"><path d="M0 0h5L2.5 3z" fill="#3e5530"/></svg>
<div style="position:absolute;left:109.60000000000002px;top:334.8px;width:300px;height:17.0px;line-height:17.0px;text-align:center;white-space:nowrap;font-size:8.5px;color:#1e1e1e;letter-spacing:-0.22px;-webkit-text-stroke:0.08px #333">ACCT-1001</div>
<div style="position:absolute;left:317.5px;top:338.8px;width:102.5px;height:9px;border-radius:4.5px;background:#dce3ed"></div><div style="position:absolute;left:312.5px;top:334.7px;width:102.5px;height:17.2px;line-height:17.2px;text-align:center;white-space:nowrap;font-size:8.6px;color:#3b4a5e;letter-spacing:-0.3px">Loan</div><svg style="left:411px;top:342.0px" width="4.6" height="2.8" viewBox="0 0 5 3"><path d="M0 0h5L2.5 3z" fill="#3b4a5e"/></svg>
<div style="position:absolute;left:434.5px;top:338.8px;width:82.5px;height:9px;border-radius:4.5px;background:#dccdf7"></div><div style="position:absolute;left:429.5px;top:334.7px;width:82.5px;height:17.2px;line-height:17.2px;text-align:center;white-space:nowrap;font-size:8.6px;color:#4a3480;letter-spacing:-0.3px">Limit Change</div><svg style="left:508px;top:342.0px" width="4.6" height="2.8" viewBox="0 0 5 3"><path d="M0 0h5L2.5 3z" fill="#4a3480"/></svg>
<div style="position:absolute;left:424.6px;top:334.8px;width:300px;height:17.0px;line-height:17.0px;text-align:center;white-space:nowrap;font-size:8.5px;color:#1e1e1e;letter-spacing:-0.22px;-webkit-text-stroke:0.08px #333">Old Data</div>
<div style="position:absolute;left:524.6px;top:334.8px;width:300px;height:17.0px;line-height:17.0px;text-align:center;white-space:nowrap;font-size:8.5px;color:#1e1e1e;letter-spacing:-0.22px;-webkit-text-stroke:0.08px #333">New Data</div>
<div style="position:absolute;left:731.5px;top:338.8px;width:85.5px;height:9px;border-radius:4.5px;background:#fcd5cf"></div><div style="position:absolute;left:726.5px;top:334.7px;width:85.5px;height:17.2px;line-height:17.2px;text-align:center;white-space:nowrap;font-size:8.6px;color:#6e3d36;letter-spacing:-0.3px">Pending</div><svg style="left:808px;top:342.0px" width="4.6" height="2.8" viewBox="0 0 5 3"><path d="M0 0h5L2.5 3z" fill="#6e3d36"/></svg>
<div style="position:absolute;left:722.6px;top:334.8px;width:300px;height:17.0px;line-height:17.0px;text-align:center;white-space:nowrap;font-size:8.5px;color:#1e1e1e;letter-spacing:-0.22px;-webkit-text-stroke:0.08px #333">Customer</div>
<div style="position:absolute;left:818.1px;top:334.8px;width:300px;height:17.0px;line-height:17.0px;text-align:center;white-space:nowrap;font-size:8.5px;color:#1e1e1e;letter-spacing:-0.22px;-webkit-text-stroke:0.08px #333">Manager</div>
<div style="position:absolute;left:906.0999999999999px;top:334.8px;width:300px;height:17.0px;line-height:17.0px;text-align:center;white-space:nowrap;font-size:8.5px;color:#1e1e1e;letter-spacing:-0.22px;-webkit-text-stroke:0.08px #333">2024-05-17</div>
<div style="position:absolute;left:987.5999999999999px;top:334.8px;width:300px;height:17.0px;line-height:17.0px;text-align:center;white-space:nowrap;font-size:8.5px;color:#1e1e1e;letter-spacing:-0.22px;-webkit-text-stroke:0.08px #333">2024-05-20</div>
<div style="position:absolute;left:1066.6px;top:334.8px;width:300px;height:17.0px;line-height:17.0px;text-align:center;white-space:nowrap;font-size:8.5px;color:#1e1e1e;letter-spacing:-0.22px;-webkit-text-stroke:0.08px #333">45432</div>
<div style="position:absolute;left:49px;top:350px;width:1223px;height:1px;background:#dbe8d5"></div>
<div style="position:absolute;left:-64.0px;top:350.8px;width:300px;height:17.0px;line-height:17.0px;text-align:center;white-space:nowrap;font-size:8.5px;color:#1e1e1e;-webkit-text-stroke:0.08px #333">2</div>
<div style="position:absolute;left:128.5px;top:354.8px;width:72.5px;height:9px;border-radius:4.5px;background:#e0e7f7"></div><div style="position:absolute;left:123.5px;top:350.7px;width:72.5px;height:17.2px;line-height:17.2px;text-align:center;white-space:nowrap;font-size:8.6px;color:#3c4a6e;letter-spacing:-0.3px">Epsilon Syst...</div><svg style="left:192px;top:358.0px" width="4.6" height="2.8" viewBox="0 0 5 3"><path d="M0 0h5L2.5 3z" fill="#3c4a6e"/></svg>
<div style="position:absolute;left:109.60000000000002px;top:350.8px;width:300px;height:17.0px;line-height:17.0px;text-align:center;white-space:nowrap;font-size:8.5px;color:#1e1e1e;letter-spacing:-0.22px;-webkit-text-stroke:0.08px #333">ACCT-1002</div>
<div style="position:absolute;left:317.5px;top:354.8px;width:102.5px;height:9px;border-radius:4.5px;background:#ede6dd"></div><div style="position:absolute;left:312.5px;top:350.7px;width:102.5px;height:17.2px;line-height:17.2px;text-align:center;white-space:nowrap;font-size:8.6px;color:#5e5b56;letter-spacing:-0.3px">Current</div><svg style="left:411px;top:358.0px" width="4.6" height="2.8" viewBox="0 0 5 3"><path d="M0 0h5L2.5 3z" fill="#5e5b56"/></svg>
<div style="position:absolute;left:434.5px;top:354.8px;width:82.5px;height:9px;border-radius:4.5px;background:#e2e6fc"></div><div style="position:absolute;left:429.5px;top:350.7px;width:82.5px;height:17.2px;line-height:17.2px;text-align:center;white-space:nowrap;font-size:8.6px;color:#37458a;letter-spacing:-0.3px">KYC Update</div><svg style="left:508px;top:358.0px" width="4.6" height="2.8" viewBox="0 0 5 3"><path d="M0 0h5L2.5 3z" fill="#37458a"/></svg>
<div style="position:absolute;left:424.6px;top:350.8px;width:300px;height:17.0px;line-height:17.0px;text-align:center;white-space:nowrap;font-size:8.5px;color:#1e1e1e;letter-spacing:-0.22px;-webkit-text-stroke:0.08px #333">Old Data</div>
<div style="position:absolute;left:524.6px;top:350.8px;width:300px;height:17.0px;line-height:17.0px;text-align:center;white-space:nowrap;font-size:8.5px;color:#1e1e1e;letter-spacing:-0.22px;-webkit-text-stroke:0.08px #333">New Data</div>
<div style="position:absolute;left:731.5px;top:354.8px;width:85.5px;height:9px;border-radius:4.5px;background:#fcd5cf"></div><div style="position:absolute;left:726.5px;top:350.7px;width:85.5px;height:17.2px;line-height:17.2px;text-align:center;white-space:nowrap;font-size:8.6px;color:#6e3d36;letter-spacing:-0.3px">Pending</div><svg style="left:808px;top:358.0px" width="4.6" height="2.8" viewBox="0 0 5 3"><path d="M0 0h5L2.5 3z" fill="#6e3d36"/></svg>
<div style="position:absolute;left:722.6px;top:350.8px;width:300px;height:17.0px;line-height:17.0px;text-align:center;white-space:nowrap;font-size:8.5px;color:#1e1e1e;letter-spacing:-0.22px;-webkit-text-stroke:0.08px #333">Customer</div>
<div style="position:absolute;left:818.1px;top:350.8px;width:300px;height:17.0px;line-height:17.0px;text-align:center;white-space:nowrap;font-size:8.5px;color:#1e1e1e;letter-spacing:-0.22px;-webkit-text-stroke:0.08px #333">Manager</div>
<div style="position:absolute;left:906.0999999999999px;top:350.8px;width:300px;height:17.0px;line-height:17.0px;text-align:center;white-space:nowrap;font-size:8.5px;color:#1e1e1e;letter-spacing:-0.22px;-webkit-text-stroke:0.08px #333">2024-01-16</div>
<div style="position:absolute;left:987.5999999999999px;top:350.8px;width:300px;height:17.0px;line-height:17.0px;text-align:center;white-space:nowrap;font-size:8.5px;color:#1e1e1e;letter-spacing:-0.22px;-webkit-text-stroke:0.08px #333">2024-01-20</div>
<div style="position:absolute;left:1066.6px;top:350.8px;width:300px;height:17.0px;line-height:17.0px;text-align:center;white-space:nowrap;font-size:8.5px;color:#1e1e1e;letter-spacing:-0.22px;-webkit-text-stroke:0.08px #333">45314</div>
<div style="position:absolute;left:49px;top:366px;width:1223px;height:1px;background:#dbe8d5"></div>
<div style="position:absolute;left:-64.0px;top:366.8px;width:300px;height:17.0px;line-height:17.0px;text-align:center;white-space:nowrap;font-size:8.5px;color:#1e1e1e;-webkit-text-stroke:0.08px #333">3</div>
<div style="position:absolute;left:128.5px;top:370.8px;width:72.5px;height:9px;border-radius:4.5px;background:#d9ecf0"></div><div style="position:absolute;left:123.5px;top:366.7px;width:72.5px;height:17.2px;line-height:17.2px;text-align:center;white-space:nowrap;font-size:8.6px;color:#2d4a4a;letter-spacing:-0.3px">Gamma Inc</div><svg style="left:192px;top:374.0px" width="4.6" height="2.8" viewBox="0 0 5 3"><path d="M0 0h5L2.5 3z" fill="#2d4a4a"/></svg>
<div style="position:absolute;left:109.60000000000002px;top:366.8px;width:300px;height:17.0px;line-height:17.0px;text-align:center;white-space:nowrap;font-size:8.5px;color:#1e1e1e;letter-spacing:-0.22px;-webkit-text-stroke:0.08px #333">ACCT-1003</div>
<div style="position:absolute;left:317.5px;top:370.8px;width:102.5px;height:9px;border-radius:4.5px;background:#a9c3de"></div><div style="position:absolute;left:312.5px;top:366.7px;width:102.5px;height:17.2px;line-height:17.2px;text-align:center;white-space:nowrap;font-size:8.6px;color:#2a3e55;letter-spacing:-0.3px">Credit</div><svg style="left:411px;top:374.0px" width="4.6" height="2.8" viewBox="0 0 5 3"><path d="M0 0h5L2.5 3z" fill="#2a3e55"/></svg>
<div style="position:absolute;left:434.5px;top:370.8px;width:82.5px;height:9px;border-radius:4.5px;background:#dccdf7"></div><div style="position:absolute;left:429.5px;top:366.7px;width:82.5px;height:17.2px;line-height:17.2px;text-align:center;white-space:nowrap;font-size:8.6px;color:#4a3480;letter-spacing:-0.3px">Limit Change</div><svg style="left:508px;top:374.0px" width="4.6" height="2.8" viewBox="0 0 5 3"><path d="M0 0h5L2.5 3z" fill="#4a3480"/></svg>
<div style="position:absolute;left:424.6px;top:366.8px;width:300px;height:17.0px;line-height:17.0px;text-align:center;white-space:nowrap;font-size:8.5px;color:#1e1e1e;letter-spacing:-0.22px;-webkit-text-stroke:0.08px #333">Old Data</div>
<div style="position:absolute;left:524.6px;top:366.8px;width:300px;height:17.0px;line-height:17.0px;text-align:center;white-space:nowrap;font-size:8.5px;color:#1e1e1e;letter-spacing:-0.22px;-webkit-text-stroke:0.08px #333">New Data</div>
<div style="position:absolute;left:731.5px;top:370.8px;width:85.5px;height:9px;border-radius:4.5px;background:#f59a83"></div><div style="position:absolute;left:726.5px;top:366.7px;width:85.5px;height:17.2px;line-height:17.2px;text-align:center;white-space:nowrap;font-size:8.6px;color:#5e1e12;letter-spacing:-0.3px">Completed</div><svg style="left:808px;top:374.0px" width="4.6" height="2.8" viewBox="0 0 5 3"><path d="M0 0h5L2.5 3z" fill="#5e1e12"/></svg>
<div style="position:absolute;left:722.6px;top:366.8px;width:300px;height:17.0px;line-height:17.0px;text-align:center;white-space:nowrap;font-size:8.5px;color:#1e1e1e;letter-spacing:-0.22px;-webkit-text-stroke:0.08px #333">Customer</div>
<div style="position:absolute;left:818.1px;top:366.8px;width:300px;height:17.0px;line-height:17.0px;text-align:center;white-space:nowrap;font-size:8.5px;color:#1e1e1e;letter-spacing:-0.22px;-webkit-text-stroke:0.08px #333">Manager</div>
<div style="position:absolute;left:906.0999999999999px;top:366.8px;width:300px;height:17.0px;line-height:17.0px;text-align:center;white-space:nowrap;font-size:8.5px;color:#1e1e1e;letter-spacing:-0.22px;-webkit-text-stroke:0.08px #333">2024-05-11</div>
<div style="position:absolute;left:987.5999999999999px;top:366.8px;width:300px;height:17.0px;line-height:17.0px;text-align:center;white-space:nowrap;font-size:8.5px;color:#1e1e1e;letter-spacing:-0.22px;-webkit-text-stroke:0.08px #333">2024-05-16</div>
<div style="position:absolute;left:1066.6px;top:366.8px;width:300px;height:17.0px;line-height:17.0px;text-align:center;white-space:nowrap;font-size:8.5px;color:#1e1e1e;letter-spacing:-0.22px;-webkit-text-stroke:0.08px #333">45430</div>
<div style="position:absolute;left:49px;top:382px;width:1223px;height:1px;background:#dbe8d5"></div>
<div style="position:absolute;left:-64.0px;top:382.8px;width:300px;height:17.0px;line-height:17.0px;text-align:center;white-space:nowrap;font-size:8.5px;color:#1e1e1e;-webkit-text-stroke:0.08px #333">4</div>
<div style="position:absolute;left:128.5px;top:386.8px;width:72.5px;height:9px;border-radius:4.5px;background:#e0e9d6"></div><div style="position:absolute;left:123.5px;top:382.7px;width:72.5px;height:17.2px;line-height:17.2px;text-align:center;white-space:nowrap;font-size:8.6px;color:#3e5530;letter-spacing:-0.3px">Delta Solutions</div><svg style="left:192px;top:390.0px" width="4.6" height="2.8" viewBox="0 0 5 3"><path d="M0 0h5L2.5 3z" fill="#3e5530"/></svg>
<div style="position:absolute;left:109.60000000000002px;top:382.8px;width:300px;height:17.0px;line-height:17.0px;text-align:center;white-space:nowrap;font-size:8.5px;color:#1e1e1e;letter-spacing:-0.22px;-webkit-text-stroke:0.08px #333">ACCT-1004</div>
<div style="position:absolute;left:317.5px;top:386.8px;width:102.5px;height:9px;border-radius:4.5px;background:#dfd0bf"></div><div style="position:absolute;left:312.5px;top:382.7px;width:102.5px;height:17.2px;line-height:17.2px;text-align:center;white-space:nowrap;font-size:8.6px;color:#4a4038;letter-spacing:-0.3px">Savings</div><svg style="left:411px;top:390.0px" width="4.6" height="2.8" viewBox="0 0 5 3"><path d="M0 0h5L2.5 3z" fill="#4a4038"/></svg>
<div style="position:absolute;left:434.5px;top:386.8px;width:82.5px;height:9px;border-radius:4.5px;background:#d3e7fb"></div><div style="position:absolute;left:429.5px;top:382.7px;width:82.5px;height:17.2px;line-height:17.2px;text-align:center;white-space:nowrap;font-size:8.6px;color:#274c8a;letter-spacing:-0.3px">Address Change</div><svg style="left:508px;top:390.0px" width="4.6" height="2.8" viewBox="0 0 5 3"><path d="M0 0h5L2.5 3z" fill="#274c8a"/></svg>
<div style="position:absolute;left:424.6px;top:382.8px;width:300px;height:17.0px;line-height:17.0px;text-align:center;white-space:nowrap;font-size:8.5px;color:#1e1e1e;letter-spacing:-0.22px;-webkit-text-stroke:0.08px #333">Old Data</div>
<div style="position:absolute;left:524.6px;top:382.8px;width:300px;height:17.0px;line-height:17.0px;text-align:center;white-space:nowrap;font-size:8.5px;color:#1e1e1e;letter-spacing:-0.22px;-webkit-text-stroke:0.08px #333">New Data</div>
<div style="position:absolute;left:731.5px;top:386.8px;width:85.5px;height:9px;border-radius:4.5px;background:#f59a83"></div><div style="position:absolute;left:726.5px;top:382.7px;width:85.5px;height:17.2px;line-height:17.2px;text-align:center;white-space:nowrap;font-size:8.6px;color:#5e1e12;letter-spacing:-0.3px">Completed</div><svg style="left:808px;top:390.0px" width="4.6" height="2.8" viewBox="0 0 5 3"><path d="M0 0h5L2.5 3z" fill="#5e1e12"/></svg>
<div style="position:absolute;left:722.6px;top:382.8px;width:300px;height:17.0px;line-height:17.0px;text-align:center;white-space:nowrap;font-size:8.5px;color:#1e1e1e;letter-spacing:-0.22px;-webkit-text-stroke:0.08px #333">Customer</div>
<div style="position:absolute;left:818.1px;top:382.8px;width:300px;height:17.0px;line-height:17.0px;text-align:center;white-space:nowrap;font-size:8.5px;color:#1e1e1e;letter-spacing:-0.22px;-webkit-text-stroke:0.08px #333">Manager</div>
<div style="position:absolute;left:906.0999999999999px;top:382.8px;width:300px;height:17.0px;line-height:17.0px;text-align:center;white-space:nowrap;font-size:8.5px;color:#1e1e1e;letter-spacing:-0.22px;-webkit-text-stroke:0.08px #333">2024-01-13</div>
<div style="position:absolute;left:987.5999999999999px;top:382.8px;width:300px;height:17.0px;line-height:17.0px;text-align:center;white-space:nowrap;font-size:8.5px;color:#1e1e1e;letter-spacing:-0.22px;-webkit-text-stroke:0.08px #333">2024-01-15</div>
<div style="position:absolute;left:1066.6px;top:382.8px;width:300px;height:17.0px;line-height:17.0px;text-align:center;white-space:nowrap;font-size:8.5px;color:#1e1e1e;letter-spacing:-0.22px;-webkit-text-stroke:0.08px #333">45307</div>
<div style="position:absolute;left:49px;top:398px;width:1223px;height:1px;background:#dbe8d5"></div>
<div style="position:absolute;left:-64.0px;top:398.8px;width:300px;height:17.0px;line-height:17.0px;text-align:center;white-space:nowrap;font-size:8.5px;color:#1e1e1e;-webkit-text-stroke:0.08px #333">5</div>
<div style="position:absolute;left:128.5px;top:402.8px;width:72.5px;height:9px;border-radius:4.5px;background:#cce0fb"></div><div style="position:absolute;left:123.5px;top:398.7px;width:72.5px;height:17.2px;line-height:17.2px;text-align:center;white-space:nowrap;font-size:8.6px;color:#2d4a86;letter-spacing:-0.3px">Beta Ltd</div><svg style="left:192px;top:406.0px" width="4.6" height="2.8" viewBox="0 0 5 3"><path d="M0 0h5L2.5 3z" fill="#2d4a86"/></svg>
<div style="position:absolute;left:109.60000000000002px;top:398.8px;width:300px;height:17.0px;line-height:17.0px;text-align:center;white-space:nowrap;font-size:8.5px;color:#1e1e1e;letter-spacing:-0.22px;-webkit-text-stroke:0.08px #333">ACCT-1005</div>
<div style="position:absolute;left:317.5px;top:402.8px;width:102.5px;height:9px;border-radius:4.5px;background:#ede6dd"></div><div style="position:absolute;left:312.5px;top:398.7px;width:102.5px;height:17.2px;line-height:17.2px;text-align:center;white-space:nowrap;font-size:8.6px;color:#5e5b56;letter-spacing:-0.3px">Current</div><svg style="left:411px;top:406.0px" width="4.6" height="2.8" viewBox="0 0 5 3"><path d="M0 0h5L2.5 3z" fill="#5e5b56"/></svg>
<div style="position:absolute;left:434.5px;top:402.8px;width:82.5px;height:9px;border-radius:4.5px;background:#d3e7fb"></div><div style="position:absolute;left:429.5px;top:398.7px;width:82.5px;height:17.2px;line-height:17.2px;text-align:center;white-space:nowrap;font-size:8.6px;color:#274c8a;letter-spacing:-0.3px">Address Change</div><svg style="left:508px;top:406.0px" width="4.6" height="2.8" viewBox="0 0 5 3"><path d="M0 0h5L2.5 3z" fill="#274c8a"/></svg>
<div style="position:absolute;left:424.6px;top:398.8px;width:300px;height:17.0px;line-height:17.0px;text-align:center;white-space:nowrap;font-size:8.5px;color:#1e1e1e;letter-spacing:-0.22px;-webkit-text-stroke:0.08px #333">Old Data</div>
<div style="position:absolute;left:524.6px;top:398.8px;width:300px;height:17.0px;line-height:17.0px;text-align:center;white-space:nowrap;font-size:8.5px;color:#1e1e1e;letter-spacing:-0.22px;-webkit-text-stroke:0.08px #333">New Data</div>
<div style="position:absolute;left:731.5px;top:402.8px;width:85.5px;height:9px;border-radius:4.5px;background:#fcd5cf"></div><div style="position:absolute;left:726.5px;top:398.7px;width:85.5px;height:17.2px;line-height:17.2px;text-align:center;white-space:nowrap;font-size:8.6px;color:#6e3d36;letter-spacing:-0.3px">Pending</div><svg style="left:808px;top:406.0px" width="4.6" height="2.8" viewBox="0 0 5 3"><path d="M0 0h5L2.5 3z" fill="#6e3d36"/></svg>
<div style="position:absolute;left:722.6px;top:398.8px;width:300px;height:17.0px;line-height:17.0px;text-align:center;white-space:nowrap;font-size:8.5px;color:#1e1e1e;letter-spacing:-0.22px;-webkit-text-stroke:0.08px #333">Customer</div>
<div style="position:absolute;left:818.1px;top:398.8px;width:300px;height:17.0px;line-height:17.0px;text-align:center;white-space:nowrap;font-size:8.5px;color:#1e1e1e;letter-spacing:-0.22px;-webkit-text-stroke:0.08px #333">Manager</div>
<div style="position:absolute;left:906.0999999999999px;top:398.8px;width:300px;height:17.0px;line-height:17.0px;text-align:center;white-space:nowrap;font-size:8.5px;color:#1e1e1e;letter-spacing:-0.22px;-webkit-text-stroke:0.08px #333">2024-05-01</div>
<div style="position:absolute;left:987.5999999999999px;top:398.8px;width:300px;height:17.0px;line-height:17.0px;text-align:center;white-space:nowrap;font-size:8.5px;color:#1e1e1e;letter-spacing:-0.22px;-webkit-text-stroke:0.08px #333">2024-05-06</div>
<div style="position:absolute;left:1066.6px;top:398.8px;width:300px;height:17.0px;line-height:17.0px;text-align:center;white-space:nowrap;font-size:8.5px;color:#1e1e1e;letter-spacing:-0.22px;-webkit-text-stroke:0.08px #333">45418</div>
<div style="position:absolute;left:49px;top:414px;width:1223px;height:1px;background:#dbe8d5"></div>
<div style="position:absolute;left:-64.0px;top:414.8px;width:300px;height:17.0px;line-height:17.0px;text-align:center;white-space:nowrap;font-size:8.5px;color:#1e1e1e;-webkit-text-stroke:0.08px #333">6</div>
<div style="position:absolute;left:128.5px;top:418.8px;width:72.5px;height:9px;border-radius:4.5px;background:#e0e9d6"></div><div style="position:absolute;left:123.5px;top:414.7px;width:72.5px;height:17.2px;line-height:17.2px;text-align:center;white-space:nowrap;font-size:8.6px;color:#3e5530;letter-spacing:-0.3px">Delta Solutions</div><svg style="left:192px;top:422.0px" width="4.6" height="2.8" viewBox="0 0 5 3"><path d="M0 0h5L2.5 3z" fill="#3e5530"/></svg>
<div style="position:absolute;left:109.60000000000002px;top:414.8px;width:300px;height:17.0px;line-height:17.0px;text-align:center;white-space:nowrap;font-size:8.5px;color:#1e1e1e;letter-spacing:-0.22px;-webkit-text-stroke:0.08px #333">ACCT-1006</div>
<div style="position:absolute;left:317.5px;top:418.8px;width:102.5px;height:9px;border-radius:4.5px;background:#dfd0bf"></div><div style="position:absolute;left:312.5px;top:414.7px;width:102.5px;height:17.2px;line-height:17.2px;text-align:center;white-space:nowrap;font-size:8.6px;color:#4a4038;letter-spacing:-0.3px">Savings</div><svg style="left:411px;top:422.0px" width="4.6" height="2.8" viewBox="0 0 5 3"><path d="M0 0h5L2.5 3z" fill="#4a4038"/></svg>
<div style="position:absolute;left:434.5px;top:418.8px;width:82.5px;height:9px;border-radius:4.5px;background:#c8cbf6"></div><div style="position:absolute;left:429.5px;top:414.7px;width:82.5px;height:17.2px;line-height:17.2px;text-align:center;white-space:nowrap;font-size:8.6px;color:#333b80;letter-spacing:-0.3px">Contact Update</div><svg style="left:508px;top:422.0px" width="4.6" height="2.8" viewBox="0 0 5 3"><path d="M0 0h5L2.5 3z" fill="#333b80"/></svg>
<div style="position:absolute;left:424.6px;top:414.8px;width:300px;height:17.0px;line-height:17.0px;text-align:center;white-space:nowrap;font-size:8.5px;color:#1e1e1e;letter-spacing:-0.22px;-webkit-text-stroke:0.08px #333">Old Data</div>
<div style="position:absolute;left:524.6px;top:414.8px;width:300px;height:17.0px;line-height:17.0px;text-align:center;white-space:nowrap;font-size:8.5px;color:#1e1e1e;letter-spacing:-0.22px;-webkit-text-stroke:0.08px #333">New Data</div>
<div style="position:absolute;left:731.5px;top:418.8px;width:85.5px;height:9px;border-radius:4.5px;background:#f59a83"></div><div style="position:absolute;left:726.5px;top:414.7px;width:85.5px;height:17.2px;line-height:17.2px;text-align:center;white-space:nowrap;font-size:8.6px;color:#5e1e12;letter-spacing:-0.3px">Completed</div><svg style="left:808px;top:422.0px" width="4.6" height="2.8" viewBox="0 0 5 3"><path d="M0 0h5L2.5 3z" fill="#5e1e12"/></svg>
<div style="position:absolute;left:722.6px;top:414.8px;width:300px;height:17.0px;line-height:17.0px;text-align:center;white-space:nowrap;font-size:8.5px;color:#1e1e1e;letter-spacing:-0.22px;-webkit-text-stroke:0.08px #333">Customer</div>
<div style="position:absolute;left:818.1px;top:414.8px;width:300px;height:17.0px;line-height:17.0px;text-align:center;white-space:nowrap;font-size:8.5px;color:#1e1e1e;letter-spacing:-0.22px;-webkit-text-stroke:0.08px #333">Manager</div>
<div style="position:absolute;left:906.0999999999999px;top:414.8px;width:300px;height:17.0px;line-height:17.0px;text-align:center;white-space:nowrap;font-size:8.5px;color:#1e1e1e;letter-spacing:-0.22px;-webkit-text-stroke:0.08px #333">2024-01-21</div>
<div style="position:absolute;left:987.5999999999999px;top:414.8px;width:300px;height:17.0px;line-height:17.0px;text-align:center;white-space:nowrap;font-size:8.5px;color:#1e1e1e;letter-spacing:-0.22px;-webkit-text-stroke:0.08px #333">2024-01-25</div>
<div style="position:absolute;left:1066.6px;top:414.8px;width:300px;height:17.0px;line-height:17.0px;text-align:center;white-space:nowrap;font-size:8.5px;color:#1e1e1e;letter-spacing:-0.22px;-webkit-text-stroke:0.08px #333">45317</div>
<div style="position:absolute;left:49px;top:430px;width:1223px;height:1px;background:#dbe8d5"></div>
<div style="position:absolute;left:-64.0px;top:430.8px;width:300px;height:17.0px;line-height:17.0px;text-align:center;white-space:nowrap;font-size:8.5px;color:#1e1e1e;-webkit-text-stroke:0.08px #333">7</div>
<div style="position:absolute;left:128.5px;top:434.8px;width:72.5px;height:9px;border-radius:4.5px;background:#cce0fb"></div><div style="position:absolute;left:123.5px;top:430.7px;width:72.5px;height:17.2px;line-height:17.2px;text-align:center;white-space:nowrap;font-size:8.6px;color:#2d4a86;letter-spacing:-0.3px">Beta Ltd</div><svg style="left:192px;top:438.0px" width="4.6" height="2.8" viewBox="0 0 5 3"><path d="M0 0h5L2.5 3z" fill="#2d4a86"/></svg>
<div style="position:absolute;left:109.60000000000002px;top:430.8px;width:300px;height:17.0px;line-height:17.0px;text-align:center;white-space:nowrap;font-size:8.5px;color:#1e1e1e;letter-spacing:-0.22px;-webkit-text-stroke:0.08px #333">ACCT-1007</div>
<div style="position:absolute;left:317.5px;top:434.8px;width:102.5px;height:9px;border-radius:4.5px;background:#a9c3de"></div><div style="position:absolute;left:312.5px;top:430.7px;width:102.5px;height:17.2px;line-height:17.2px;text-align:center;white-space:nowrap;font-size:8.6px;color:#2a3e55;letter-spacing:-0.3px">Credit</div><svg style="left:411px;top:438.0px" width="4.6" height="2.8" viewBox="0 0 5 3"><path d="M0 0h5L2.5 3z" fill="#2a3e55"/></svg>
<div style="position:absolute;left:434.5px;top:434.8px;width:82.5px;height:9px;border-radius:4.5px;background:#dccdf7"></div><div style="position:absolute;left:429.5px;top:430.7px;width:82.5px;height:17.2px;line-height:17.2px;text-align:center;white-space:nowrap;font-size:8.6px;color:#4a3480;letter-spacing:-0.3px">Limit Change</div><svg style="left:508px;top:438.0px" width="4.6" height="2.8" viewBox="0 0 5 3"><path d="M0 0h5L2.5 3z" fill="#4a3480"/></svg>
<div style="position:absolute;left:424.6px;top:430.8px;width:300px;height:17.0px;line-height:17.0px;text-align:center;white-space:nowrap;font-size:8.5px;color:#1e1e1e;letter-spacing:-0.22px;-webkit-text-stroke:0.08px #333">Old Data</div>
<div style="position:absolute;left:524.6px;top:430.8px;width:300px;height:17.0px;line-height:17.0px;text-align:center;white-space:nowrap;font-size:8.5px;color:#1e1e1e;letter-spacing:-0.22px;-webkit-text-stroke:0.08px #333">New Data</div>
<div style="position:absolute;left:731.5px;top:434.8px;width:85.5px;height:9px;border-radius:4.5px;background:#e1d0f5"></div><div style="position:absolute;left:726.5px;top:430.7px;width:85.5px;height:17.2px;line-height:17.2px;text-align:center;white-space:nowrap;font-size:8.6px;color:#4a3a6e;letter-spacing:-0.3px">Rejected</div><svg style="left:808px;top:438.0px" width="4.6" height="2.8" viewBox="0 0 5 3"><path d="M0 0h5L2.5 3z" fill="#4a3a6e"/></svg>
<div style="position:absolute;left:722.6px;top:430.8px;width:300px;height:17.0px;line-height:17.0px;text-align:center;white-space:nowrap;font-size:8.5px;color:#1e1e1e;letter-spacing:-0.22px;-webkit-text-stroke:0.08px #333">Customer</div>
<div style="position:absolute;left:818.1px;top:430.8px;width:300px;height:17.0px;line-height:17.0px;text-align:center;white-space:nowrap;font-size:8.5px;color:#1e1e1e;letter-spacing:-0.22px;-webkit-text-stroke:0.08px #333">Manager</div>
<div style="position:absolute;left:906.0999999999999px;top:430.8px;width:300px;height:17.0px;line-height:17.0px;text-align:center;white-space:nowrap;font-size:8.5px;color:#1e1e1e;letter-spacing:-0.22px;-webkit-text-stroke:0.08px #333">2024-06-24</div>
<div style="position:absolute;left:987.5999999999999px;top:430.8px;width:300px;height:17.0px;line-height:17.0px;text-align:center;white-space:nowrap;font-size:8.5px;color:#1e1e1e;letter-spacing:-0.22px;-webkit-text-stroke:0.08px #333">2024-06-26</div>
<div style="position:absolute;left:1066.6px;top:430.8px;width:300px;height:17.0px;line-height:17.0px;text-align:center;white-space:nowrap;font-size:8.5px;color:#1e1e1e;letter-spacing:-0.22px;-webkit-text-stroke:0.08px #333">45469</div>
<div style="position:absolute;left:49px;top:446px;width:1223px;height:1px;background:#dbe8d5"></div>
<div style="position:absolute;left:-64.0px;top:446.8px;width:300px;height:17.0px;line-height:17.0px;text-align:center;white-space:nowrap;font-size:8.5px;color:#1e1e1e;-webkit-text-stroke:0.08px #333">8</div>
<div style="position:absolute;left:128.5px;top:450.8px;width:72.5px;height:9px;border-radius:4.5px;background:#e0e9d6"></div><div style="position:absolute;left:123.5px;top:446.7px;width:72.5px;height:17.2px;line-height:17.2px;text-align:center;white-space:nowrap;font-size:8.6px;color:#3e5530;letter-spacing:-0.3px">Delta Solutions</div><svg style="left:192px;top:454.0px" width="4.6" height="2.8" viewBox="0 0 5 3"><path d="M0 0h5L2.5 3z" fill="#3e5530"/></svg>
<div style="position:absolute;left:109.60000000000002px;top:446.8px;width:300px;height:17.0px;line-height:17.0px;text-align:center;white-space:nowrap;font-size:8.5px;color:#1e1e1e;letter-spacing:-0.22px;-webkit-text-stroke:0.08px #333">ACCT-1008</div>
<div style="position:absolute;left:317.5px;top:450.8px;width:102.5px;height:9px;border-radius:4.5px;background:#dfd0bf"></div><div style="position:absolute;left:312.5px;top:446.7px;width:102.5px;height:17.2px;line-height:17.2px;text-align:center;white-space:nowrap;font-size:8.6px;color:#4a4038;letter-spacing:-0.3px">Savings</div><svg style="left:411px;top:454.0px" width="4.6" height="2.8" viewBox="0 0 5 3"><path d="M0 0h5L2.5 3z" fill="#4a4038"/></svg>
<div style="position:absolute;left:434.5px;top:450.8px;width:82.5px;height:9px;border-radius:4.5px;background:#c8cbf6"></div><div style="position:absolute;left:429.5px;top:446.7px;width:82.5px;height:17.2px;line-height:17.2px;text-align:center;white-space:nowrap;font-size:8.6px;color:#333b80;letter-spacing:-0.3px">Contact Update</div><svg style="left:508px;top:454.0px" width="4.6" height="2.8" viewBox="0 0 5 3"><path d="M0 0h5L2.5 3z" fill="#333b80"/></svg>
<div style="position:absolute;left:424.6px;top:446.8px;width:300px;height:17.0px;line-height:17.0px;text-align:center;white-space:nowrap;font-size:8.5px;color:#1e1e1e;letter-spacing:-0.22px;-webkit-text-stroke:0.08px #333">Old Data</div>
<div style="position:absolute;left:524.6px;top:446.8px;width:300px;height:17.0px;line-height:17.0px;text-align:center;white-space:nowrap;font-size:8.5px;color:#1e1e1e;letter-spacing:-0.22px;-webkit-text-stroke:0.08px #333">New Data</div>
<div style="position:absolute;left:731.5px;top:450.8px;width:85.5px;height:9px;border-radius:4.5px;background:#f59a83"></div><div style="position:absolute;left:726.5px;top:446.7px;width:85.5px;height:17.2px;line-height:17.2px;text-align:center;white-space:nowrap;font-size:8.6px;color:#5e1e12;letter-spacing:-0.3px">Completed</div><svg style="left:808px;top:454.0px" width="4.6" height="2.8" viewBox="0 0 5 3"><path d="M0 0h5L2.5 3z" fill="#5e1e12"/></svg>
<div style="position:absolute;left:722.6px;top:446.8px;width:300px;height:17.0px;line-height:17.0px;text-align:center;white-space:nowrap;font-size:8.5px;color:#1e1e1e;letter-spacing:-0.22px;-webkit-text-stroke:0.08px #333">Customer</div>
<div style="position:absolute;left:818.1px;top:446.8px;width:300px;height:17.0px;line-height:17.0px;text-align:center;white-space:nowrap;font-size:8.5px;color:#1e1e1e;letter-spacing:-0.22px;-webkit-text-stroke:0.08px #333">Manager</div>
<div style="position:absolute;left:906.0999999999999px;top:446.8px;width:300px;height:17.0px;line-height:17.0px;text-align:center;white-space:nowrap;font-size:8.5px;color:#1e1e1e;letter-spacing:-0.22px;-webkit-text-stroke:0.08px #333">2024-05-17</div>
<div style="position:absolute;left:987.5999999999999px;top:446.8px;width:300px;height:17.0px;line-height:17.0px;text-align:center;white-space:nowrap;font-size:8.5px;color:#1e1e1e;letter-spacing:-0.22px;-webkit-text-stroke:0.08px #333">2024-05-20</div>
<div style="position:absolute;left:1066.6px;top:446.8px;width:300px;height:17.0px;line-height:17.0px;text-align:center;white-space:nowrap;font-size:8.5px;color:#1e1e1e;letter-spacing:-0.22px;-webkit-text-stroke:0.08px #333">45434</div>
<div style="position:absolute;left:49px;top:462px;width:1223px;height:1px;background:#dbe8d5"></div>
<div style="position:absolute;left:-64.0px;top:462.8px;width:300px;height:17.0px;line-height:17.0px;text-align:center;white-space:nowrap;font-size:8.5px;color:#1e1e1e;-webkit-text-stroke:0.08px #333">9</div>
<div style="position:absolute;left:128.5px;top:466.8px;width:72.5px;height:9px;border-radius:4.5px;background:#cce0fb"></div><div style="position:absolute;left:123.5px;top:462.7px;width:72.5px;height:17.2px;line-height:17.2px;text-align:center;white-space:nowrap;font-size:8.6px;color:#2d4a86;letter-spacing:-0.3px">Beta Ltd</div><svg style="left:192px;top:470.0px" width="4.6" height="2.8" viewBox="0 0 5 3"><path d="M0 0h5L2.5 3z" fill="#2d4a86"/></svg>
<div style="position:absolute;left:109.60000000000002px;top:462.8px;width:300px;height:17.0px;line-height:17.0px;text-align:center;white-space:nowrap;font-size:8.5px;color:#1e1e1e;letter-spacing:-0.22px;-webkit-text-stroke:0.08px #333">ACCT-1009</div>
<div style="position:absolute;left:317.5px;top:466.8px;width:102.5px;height:9px;border-radius:4.5px;background:#ede6dd"></div><div style="position:absolute;left:312.5px;top:462.7px;width:102.5px;height:17.2px;line-height:17.2px;text-align:center;white-space:nowrap;font-size:8.6px;color:#5e5b56;letter-spacing:-0.3px">Current</div><svg style="left:411px;top:470.0px" width="4.6" height="2.8" viewBox="0 0 5 3"><path d="M0 0h5L2.5 3z" fill="#5e5b56"/></svg>
<div style="position:absolute;left:434.5px;top:466.8px;width:82.5px;height:9px;border-radius:4.5px;background:#d3e7fb"></div><div style="position:absolute;left:429.5px;top:462.7px;width:82.5px;height:17.2px;line-height:17.2px;text-align:center;white-space:nowrap;font-size:8.6px;color:#274c8a;letter-spacing:-0.3px">Address Change</div><svg style="left:508px;top:470.0px" width="4.6" height="2.8" viewBox="0 0 5 3"><path d="M0 0h5L2.5 3z" fill="#274c8a"/></svg>
<div style="position:absolute;left:424.6px;top:462.8px;width:300px;height:17.0px;line-height:17.0px;text-align:center;white-space:nowrap;font-size:8.5px;color:#1e1e1e;letter-spacing:-0.22px;-webkit-text-stroke:0.08px #333">Old Data</div>
<div style="position:absolute;left:524.6px;top:462.8px;width:300px;height:17.0px;line-height:17.0px;text-align:center;white-space:nowrap;font-size:8.5px;color:#1e1e1e;letter-spacing:-0.22px;-webkit-text-stroke:0.08px #333">New Data</div>
<div style="position:absolute;left:731.5px;top:466.8px;width:85.5px;height:9px;border-radius:4.5px;background:#f59a83"></div><div style="position:absolute;left:726.5px;top:462.7px;width:85.5px;height:17.2px;line-height:17.2px;text-align:center;white-space:nowrap;font-size:8.6px;color:#5e1e12;letter-spacing:-0.3px">Completed</div><svg style="left:808px;top:470.0px" width="4.6" height="2.8" viewBox="0 0 5 3"><path d="M0 0h5L2.5 3z" fill="#5e1e12"/></svg>
<div style="position:absolute;left:722.6px;top:462.8px;width:300px;height:17.0px;line-height:17.0px;text-align:center;white-space:nowrap;font-size:8.5px;color:#1e1e1e;letter-spacing:-0.22px;-webkit-text-stroke:0.08px #333">Customer</div>
<div style="position:absolute;left:818.1px;top:462.8px;width:300px;height:17.0px;line-height:17.0px;text-align:center;white-space:nowrap;font-size:8.5px;color:#1e1e1e;letter-spacing:-0.22px;-webkit-text-stroke:0.08px #333">Manager</div>
<div style="position:absolute;left:906.0999999999999px;top:462.8px;width:300px;height:17.0px;line-height:17.0px;text-align:center;white-space:nowrap;font-size:8.5px;color:#1e1e1e;letter-spacing:-0.22px;-webkit-text-stroke:0.08px #333">2024-04-02</div>
<div style="position:absolute;left:987.5999999999999px;top:462.8px;width:300px;height:17.0px;line-height:17.0px;text-align:center;white-space:nowrap;font-size:8.5px;color:#1e1e1e;letter-spacing:-0.22px;-webkit-text-stroke:0.08px #333">2024-04-04</div>
<div style="position:absolute;left:1066.6px;top:462.8px;width:300px;height:17.0px;line-height:17.0px;text-align:center;white-space:nowrap;font-size:8.5px;color:#1e1e1e;letter-spacing:-0.22px;-webkit-text-stroke:0.08px #333">45386</div>
<div style="position:absolute;left:49px;top:478px;width:1223px;height:1px;background:#dbe8d5"></div>
<div style="position:absolute;left:-64.0px;top:478.8px;width:300px;height:17.0px;line-height:17.0px;text-align:center;white-space:nowrap;font-size:8.5px;color:#1e1e1e;-webkit-text-stroke:0.08px #333">10</div>
<div style="position:absolute;left:128.5px;top:482.8px;width:72.5px;height:9px;border-radius:4.5px;background:#e0e9d6"></div><div style="position:absolute;left:123.5px;top:478.7px;width:72.5px;height:17.2px;line-height:17.2px;text-align:center;white-space:nowrap;font-size:8.6px;color:#3e5530;letter-spacing:-0.3px">Delta Solutions</div><svg style="left:192px;top:486.0px" width="4.6" height="2.8" viewBox="0 0 5 3"><path d="M0 0h5L2.5 3z" fill="#3e5530"/></svg>
<div style="position:absolute;left:109.60000000000002px;top:478.8px;width:300px;height:17.0px;line-height:17.0px;text-align:center;white-space:nowrap;font-size:8.5px;color:#1e1e1e;letter-spacing:-0.22px;-webkit-text-stroke:0.08px #333">ACCT-1010</div>
<div style="position:absolute;left:317.5px;top:482.8px;width:102.5px;height:9px;border-radius:4.5px;background:#a9c3de"></div><div style="position:absolute;left:312.5px;top:478.7px;width:102.5px;height:17.2px;line-height:17.2px;text-align:center;white-space:nowrap;font-size:8.6px;color:#2a3e55;letter-spacing:-0.3px">Credit</div><svg style="left:411px;top:486.0px" width="4.6" height="2.8" viewBox="0 0 5 3"><path d="M0 0h5L2.5 3z" fill="#2a3e55"/></svg>
<div style="position:absolute;left:434.5px;top:482.8px;width:82.5px;height:9px;border-radius:4.5px;background:#d3e7fb"></div><div style="position:absolute;left:429.5px;top:478.7px;width:82.5px;height:17.2px;line-height:17.2px;text-align:center;white-space:nowrap;font-size:8.6px;color:#274c8a;letter-spacing:-0.3px">Address Change</div><svg style="left:508px;top:486.0px" width="4.6" height="2.8" viewBox="0 0 5 3"><path d="M0 0h5L2.5 3z" fill="#274c8a"/></svg>
<div style="position:absolute;left:424.6px;top:478.8px;width:300px;height:17.0px;line-height:17.0px;text-align:center;white-space:nowrap;font-size:8.5px;color:#1e1e1e;letter-spacing:-0.22px;-webkit-text-stroke:0.08px #333">Old Data</div>
<div style="position:absolute;left:524.6px;top:478.8px;width:300px;height:17.0px;line-height:17.0px;text-align:center;white-space:nowrap;font-size:8.5px;color:#1e1e1e;letter-spacing:-0.22px;-webkit-text-stroke:0.08px #333">New Data</div>
<div style="position:absolute;left:731.5px;top:482.8px;width:85.5px;height:9px;border-radius:4.5px;background:#f59a83"></div><div style="position:absolute;left:726.5px;top:478.7px;width:85.5px;height:17.2px;line-height:17.2px;text-align:center;white-space:nowrap;font-size:8.6px;color:#5e1e12;letter-spacing:-0.3px">Completed</div><svg style="left:808px;top:486.0px" width="4.6" height="2.8" viewBox="0 0 5 3"><path d="M0 0h5L2.5 3z" fill="#5e1e12"/></svg>
<div style="position:absolute;left:722.6px;top:478.8px;width:300px;height:17.0px;line-height:17.0px;text-align:center;white-space:nowrap;font-size:8.5px;color:#1e1e1e;letter-spacing:-0.22px;-webkit-text-stroke:0.08px #333">Customer</div>
<div style="position:absolute;left:818.1px;top:478.8px;width:300px;height:17.0px;line-height:17.0px;text-align:center;white-space:nowrap;font-size:8.5px;color:#1e1e1e;letter-spacing:-0.22px;-webkit-text-stroke:0.08px #333">Manager</div>
<div style="position:absolute;left:906.0999999999999px;top:478.8px;width:300px;height:17.0px;line-height:17.0px;text-align:center;white-space:nowrap;font-size:8.5px;color:#1e1e1e;letter-spacing:-0.22px;-webkit-text-stroke:0.08px #333">2024-02-17</div>
<div style="position:absolute;left:987.5999999999999px;top:478.8px;width:300px;height:17.0px;line-height:17.0px;text-align:center;white-space:nowrap;font-size:8.5px;color:#1e1e1e;letter-spacing:-0.22px;-webkit-text-stroke:0.08px #333">2024-02-18</div>
<div style="position:absolute;left:1066.6px;top:478.8px;width:300px;height:17.0px;line-height:17.0px;text-align:center;white-space:nowrap;font-size:8.5px;color:#1e1e1e;letter-spacing:-0.22px;-webkit-text-stroke:0.08px #333">45342</div>
<div style="position:absolute;left:49px;top:494px;width:1223px;height:1px;background:#dbe8d5"></div>
<div style="position:absolute;left:-64.0px;top:494.8px;width:300px;height:17.0px;line-height:17.0px;text-align:center;white-space:nowrap;font-size:8.5px;color:#1e1e1e;-webkit-text-stroke:0.08px #333">11</div>
<div style="position:absolute;left:128.5px;top:498.8px;width:72.5px;height:9px;border-radius:4.5px;background:#bfe3bb"></div><div style="position:absolute;left:123.5px;top:494.7px;width:72.5px;height:17.2px;line-height:17.2px;text-align:center;white-space:nowrap;font-size:8.6px;color:#2e5a30;letter-spacing:-0.3px">Alpha Corp</div><svg style="left:192px;top:502.0px" width="4.6" height="2.8" viewBox="0 0 5 3"><path d="M0 0h5L2.5 3z" fill="#2e5a30"/></svg>
<div style="position:absolute;left:109.60000000000002px;top:494.8px;width:300px;height:17.0px;line-height:17.0px;text-align:center;white-space:nowrap;font-size:8.5px;color:#1e1e1e;letter-spacing:-0.22px;-webkit-text-stroke:0.08px #333">ACCT-1011</div>
<div style="position:absolute;left:317.5px;top:498.8px;width:102.5px;height:9px;border-radius:4.5px;background:#a9c3de"></div><div style="position:absolute;left:312.5px;top:494.7px;width:102.5px;height:17.2px;line-height:17.2px;text-align:center;white-space:nowrap;font-size:8.6px;color:#2a3e55;letter-spacing:-0.3px">Credit</div><svg style="left:411px;top:502.0px" width="4.6" height="2.8" viewBox="0 0 5 3"><path d="M0 0h5L2.5 3z" fill="#2a3e55"/></svg>
<div style="position:absolute;left:434.5px;top:498.8px;width:82.5px;height:9px;border-radius:4.5px;background:#c8cbf6"></div><div style="position:absolute;left:429.5px;top:494.7px;width:82.5px;height:17.2px;line-height:17.2px;text-align:center;white-space:nowrap;font-size:8.6px;color:#333b80;letter-spacing:-0.3px">Nominee Update</div><svg style="left:508px;top:502.0px" width="4.6" height="2.8" viewBox="0 0 5 3"><path d="M0 0h5L2.5 3z" fill="#333b80"/></svg>
<div style="position:absolute;left:424.6px;top:494.8px;width:300px;height:17.0px;line-height:17.0px;text-align:center;white-space:nowrap;font-size:8.5px;color:#1e1e1e;letter-spacing:-0.22px;-webkit-text-stroke:0.08px #333">Old Data</div>
<div style="position:absolute;left:524.6px;top:494.8px;width:300px;height:17.0px;line-height:17.0px;text-align:center;white-space:nowrap;font-size:8.5px;color:#1e1e1e;letter-spacing:-0.22px;-webkit-text-stroke:0.08px #333">New Data</div>
<div style="position:absolute;left:731.5px;top:498.8px;width:85.5px;height:9px;border-radius:4.5px;background:#fcd5cf"></div><div style="position:absolute;left:726.5px;top:494.7px;width:85.5px;height:17.2px;line-height:17.2px;text-align:center;white-space:nowrap;font-size:8.6px;color:#6e3d36;letter-spacing:-0.3px">Pending</div><svg style="left:808px;top:502.0px" width="4.6" height="2.8" viewBox="0 0 5 3"><path d="M0 0h5L2.5 3z" fill="#6e3d36"/></svg>
<div style="position:absolute;left:722.6px;top:494.8px;width:300px;height:17.0px;line-height:17.0px;text-align:center;white-space:nowrap;font-size:8.5px;color:#1e1e1e;letter-spacing:-0.22px;-webkit-text-stroke:0.08px #333">Customer</div>
<div style="position:absolute;left:818.1px;top:494.8px;width:300px;height:17.0px;line-height:17.0px;text-align:center;white-space:nowrap;font-size:8.5px;color:#1e1e1e;letter-spacing:-0.22px;-webkit-text-stroke:0.08px #333">Manager</div>
<div style="position:absolute;left:906.0999999999999px;top:494.8px;width:300px;height:17.0px;line-height:17.0px;text-align:center;white-space:nowrap;font-size:8.5px;color:#1e1e1e;letter-spacing:-0.22px;-webkit-text-stroke:0.08px #333">2024-02-09</div>
<div style="position:absolute;left:987.5999999999999px;top:494.8px;width:300px;height:17.0px;line-height:17.0px;text-align:center;white-space:nowrap;font-size:8.5px;color:#1e1e1e;letter-spacing:-0.22px;-webkit-text-stroke:0.08px #333">2024-02-13</div>
<div style="position:absolute;left:1066.6px;top:494.8px;width:300px;height:17.0px;line-height:17.0px;text-align:center;white-space:nowrap;font-size:8.5px;color:#1e1e1e;letter-spacing:-0.22px;-webkit-text-stroke:0.08px #333">45335</div>
<div style="position:absolute;left:49px;top:510px;width:1223px;height:1px;background:#dbe8d5"></div>
<div style="position:absolute;left:-64.0px;top:510.79999999999995px;width:300px;height:17.0px;line-height:17.0px;text-align:center;white-space:nowrap;font-size:8.5px;color:#1e1e1e;-webkit-text-stroke:0.08px #333">12</div>
<div style="position:absolute;left:128.5px;top:514.8px;width:72.5px;height:9px;border-radius:4.5px;background:#d9ecf0"></div><div style="position:absolute;left:123.5px;top:510.69999999999993px;width:72.5px;height:17.2px;line-height:17.2px;text-align:center;white-space:nowrap;font-size:8.6px;color:#2d4a4a;letter-spacing:-0.3px">Gamma Inc</div><svg style="left:192px;top:518.0px" width="4.6" height="2.8" viewBox="0 0 5 3"><path d="M0 0h5L2.5 3z" fill="#2d4a4a"/></svg>
<div style="position:absolute;left:109.60000000000002px;top:510.79999999999995px;width:300px;height:17.0px;line-height:17.0px;text-align:center;white-space:nowrap;font-size:8.5px;color:#1e1e1e;letter-spacing:-0.22px;-webkit-text-stroke:0.08px #333">ACCT-1012</div>
<div style="position:absolute;left:317.5px;top:514.8px;width:102.5px;height:9px;border-radius:4.5px;background:#ede6dd"></div><div style="position:absolute;left:312.5px;top:510.69999999999993px;width:102.5px;height:17.2px;line-height:17.2px;text-align:center;white-space:nowrap;font-size:8.6px;color:#5e5b56;letter-spacing:-0.3px">Current</div><svg style="left:411px;top:518.0px" width="4.6" height="2.8" viewBox="0 0 5 3"><path d="M0 0h5L2.5 3z" fill="#5e5b56"/></svg>
<div style="position:absolute;left:434.5px;top:514.8px;width:82.5px;height:9px;border-radius:4.5px;background:#c8cbf6"></div><div style="position:absolute;left:429.5px;top:510.69999999999993px;width:82.5px;height:17.2px;line-height:17.2px;text-align:center;white-space:nowrap;font-size:8.6px;color:#333b80;letter-spacing:-0.3px">Contact Update</div><svg style="left:508px;top:518.0px" width="4.6" height="2.8" viewBox="0 0 5 3"><path d="M0 0h5L2.5 3z" fill="#333b80"/></svg>
<div style="position:absolute;left:424.6px;top:510.79999999999995px;width:300px;height:17.0px;line-height:17.0px;text-align:center;white-space:nowrap;font-size:8.5px;color:#1e1e1e;letter-spacing:-0.22px;-webkit-text-stroke:0.08px #333">Old Data</div>
<div style="position:absolute;left:524.6px;top:510.79999999999995px;width:300px;height:17.0px;line-height:17.0px;text-align:center;white-space:nowrap;font-size:8.5px;color:#1e1e1e;letter-spacing:-0.22px;-webkit-text-stroke:0.08px #333">New Data</div>
<div style="position:absolute;left:731.5px;top:514.8px;width:85.5px;height:9px;border-radius:4.5px;background:#e1d0f5"></div><div style="position:absolute;left:726.5px;top:510.69999999999993px;width:85.5px;height:17.2px;line-height:17.2px;text-align:center;white-space:nowrap;font-size:8.6px;color:#4a3a6e;letter-spacing:-0.3px">Rejected</div><svg style="left:808px;top:518.0px" width="4.6" height="2.8" viewBox="0 0 5 3"><path d="M0 0h5L2.5 3z" fill="#4a3a6e"/></svg>
<div style="position:absolute;left:722.6px;top:510.79999999999995px;width:300px;height:17.0px;line-height:17.0px;text-align:center;white-space:nowrap;font-size:8.5px;color:#1e1e1e;letter-spacing:-0.22px;-webkit-text-stroke:0.08px #333">Customer</div>
<div style="position:absolute;left:818.1px;top:510.79999999999995px;width:300px;height:17.0px;line-height:17.0px;text-align:center;white-space:nowrap;font-size:8.5px;color:#1e1e1e;letter-spacing:-0.22px;-webkit-text-stroke:0.08px #333">Manager</div>
<div style="position:absolute;left:906.0999999999999px;top:510.79999999999995px;width:300px;height:17.0px;line-height:17.0px;text-align:center;white-space:nowrap;font-size:8.5px;color:#1e1e1e;letter-spacing:-0.22px;-webkit-text-stroke:0.08px #333">2024-01-05</div>
<div style="position:absolute;left:987.5999999999999px;top:510.79999999999995px;width:300px;height:17.0px;line-height:17.0px;text-align:center;white-space:nowrap;font-size:8.5px;color:#1e1e1e;letter-spacing:-0.22px;-webkit-text-stroke:0.08px #333">2024-01-07</div>
<div style="position:absolute;left:1066.6px;top:510.79999999999995px;width:300px;height:17.0px;line-height:17.0px;text-align:center;white-space:nowrap;font-size:8.5px;color:#1e1e1e;letter-spacing:-0.22px;-webkit-text-stroke:0.08px #333">45299</div>
<div style="position:absolute;left:49px;top:526px;width:1223px;height:1px;background:#dbe8d5"></div>
<div style="position:absolute;left:-64.0px;top:526.8px;width:300px;height:17.0px;line-height:17.0px;text-align:center;white-space:nowrap;font-size:8.5px;color:#1e1e1e;-webkit-text-stroke:0.08px #333">13</div>
<div style="position:absolute;left:128.5px;top:530.8px;width:72.5px;height:9px;border-radius:4.5px;background:#e0e9d6"></div><div style="position:absolute;left:123.5px;top:526.6999999999999px;width:72.5px;height:17.2px;line-height:17.2px;text-align:center;white-space:nowrap;font-size:8.6px;color:#3e5530;letter-spacing:-0.3px">Delta Solutions</div><svg style="left:192px;top:534.0px" width="4.6" height="2.8" viewBox="0 0 5 3"><path d="M0 0h5L2.5 3z" fill="#3e5530"/></svg>
<div style="position:absolute;left:109.60000000000002px;top:526.8px;width:300px;height:17.0px;line-height:17.0px;text-align:center;white-space:nowrap;font-size:8.5px;color:#1e1e1e;letter-spacing:-0.22px;-webkit-text-stroke:0.08px #333">ACCT-1013</div>
<div style="position:absolute;left:317.5px;top:530.8px;width:102.5px;height:9px;border-radius:4.5px;background:#ede6dd"></div><div style="position:absolute;left:312.5px;top:526.6999999999999px;width:102.5px;height:17.2px;line-height:17.2px;text-align:center;white-space:nowrap;font-size:8.6px;color:#5e5b56;letter-spacing:-0.3px">Current</div><svg style="left:411px;top:534.0px" width="4.6" height="2.8" viewBox="0 0 5 3"><path d="M0 0h5L2.5 3z" fill="#5e5b56"/></svg>
<div style="position:absolute;left:434.5px;top:530.8px;width:82.5px;height:9px;border-radius:4.5px;background:#d3e7fb"></div><div style="position:absolute;left:429.5px;top:526.6999999999999px;width:82.5px;height:17.2px;line-height:17.2px;text-align:center;white-space:nowrap;font-size:8.6px;color:#274c8a;letter-spacing:-0.3px">Address Change</div><svg style="left:508px;top:534.0px" width="4.6" height="2.8" viewBox="0 0 5 3"><path d="M0 0h5L2.5 3z" fill="#274c8a"/></svg>
<div style="position:absolute;left:424.6px;top:526.8px;width:300px;height:17.0px;line-height:17.0px;text-align:center;white-space:nowrap;font-size:8.5px;color:#1e1e1e;letter-spacing:-0.22px;-webkit-text-stroke:0.08px #333">Old Data</div>
<div style="position:absolute;left:524.6px;top:526.8px;width:300px;height:17.0px;line-height:17.0px;text-align:center;white-space:nowrap;font-size:8.5px;color:#1e1e1e;letter-spacing:-0.22px;-webkit-text-stroke:0.08px #333">New Data</div>
<div style="position:absolute;left:731.5px;top:530.8px;width:85.5px;height:9px;border-radius:4.5px;background:#f59a83"></div><div style="position:absolute;left:726.5px;top:526.6999999999999px;width:85.5px;height:17.2px;line-height:17.2px;text-align:center;white-space:nowrap;font-size:8.6px;color:#5e1e12;letter-spacing:-0.3px">Completed</div><svg style="left:808px;top:534.0px" width="4.6" height="2.8" viewBox="0 0 5 3"><path d="M0 0h5L2.5 3z" fill="#5e1e12"/></svg>
<div style="position:absolute;left:722.6px;top:526.8px;width:300px;height:17.0px;line-height:17.0px;text-align:center;white-space:nowrap;font-size:8.5px;color:#1e1e1e;letter-spacing:-0.22px;-webkit-text-stroke:0.08px #333">Customer</div>
<div style="position:absolute;left:818.1px;top:526.8px;width:300px;height:17.0px;line-height:17.0px;text-align:center;white-space:nowrap;font-size:8.5px;color:#1e1e1e;letter-spacing:-0.22px;-webkit-text-stroke:0.08px #333">Manager</div>
<div style="position:absolute;left:906.0999999999999px;top:526.8px;width:300px;height:17.0px;line-height:17.0px;text-align:center;white-space:nowrap;font-size:8.5px;color:#1e1e1e;letter-spacing:-0.22px;-webkit-text-stroke:0.08px #333">2024-05-11</div>
<div style="position:absolute;left:987.5999999999999px;top:526.8px;width:300px;height:17.0px;line-height:17.0px;text-align:center;white-space:nowrap;font-size:8.5px;color:#1e1e1e;letter-spacing:-0.22px;-webkit-text-stroke:0.08px #333">2024-05-12</div>
<div style="position:absolute;left:1066.6px;top:526.8px;width:300px;height:17.0px;line-height:17.0px;text-align:center;white-space:nowrap;font-size:8.5px;color:#1e1e1e;letter-spacing:-0.22px;-webkit-text-stroke:0.08px #333">45424</div>
<div style="position:absolute;left:49px;top:542px;width:1223px;height:1px;background:#dbe8d5"></div>
<div style="position:absolute;left:-64.0px;top:542.8px;width:300px;height:17.0px;line-height:17.0px;text-align:center;white-space:nowrap;font-size:8.5px;color:#1e1e1e;-webkit-text-stroke:0.08px #333">14</div>
<div style="position:absolute;left:128.5px;top:546.8px;width:72.5px;height:9px;border-radius:4.5px;background:#cce0fb"></div><div style="position:absolute;left:123.5px;top:542.6999999999999px;width:72.5px;height:17.2px;line-height:17.2px;text-align:center;white-space:nowrap;font-size:8.6px;color:#2d4a86;letter-spacing:-0.3px">Beta Ltd</div><svg style="left:192px;top:550.0px" width="4.6" height="2.8" viewBox="0 0 5 3"><path d="M0 0h5L2.5 3z" fill="#2d4a86"/></svg>
<div style="position:absolute;left:109.60000000000002px;top:542.8px;width:300px;height:17.0px;line-height:17.0px;text-align:center;white-space:nowrap;font-size:8.5px;color:#1e1e1e;letter-spacing:-0.22px;-webkit-text-stroke:0.08px #333">ACCT-1014</div>
<div style="position:absolute;left:317.5px;top:546.8px;width:102.5px;height:9px;border-radius:4.5px;background:#a9c3de"></div><div style="position:absolute;left:312.5px;top:542.6999999999999px;width:102.5px;height:17.2px;line-height:17.2px;text-align:center;white-space:nowrap;font-size:8.6px;color:#2a3e55;letter-spacing:-0.3px">Credit</div><svg style="left:411px;top:550.0px" width="4.6" height="2.8" viewBox="0 0 5 3"><path d="M0 0h5L2.5 3z" fill="#2a3e55"/></svg>
<div style="position:absolute;left:434.5px;top:546.8px;width:82.5px;height:9px;border-radius:4.5px;background:#c8cbf6"></div><div style="position:absolute;left:429.5px;top:542.6999999999999px;width:82.5px;height:17.2px;line-height:17.2px;text-align:center;white-space:nowrap;font-size:8.6px;color:#333b80;letter-spacing:-0.3px">Nominee Update</div><svg style="left:508px;top:550.0px" width="4.6" height="2.8" viewBox="0 0 5 3"><path d="M0 0h5L2.5 3z" fill="#333b80"/></svg>
<div style="position:absolute;left:424.6px;top:542.8px;width:300px;height:17.0px;line-height:17.0px;text-align:center;white-space:nowrap;font-size:8.5px;color:#1e1e1e;letter-spacing:-0.22px;-webkit-text-stroke:0.08px #333">Old Data</div>
<div style="position:absolute;left:524.6px;top:542.8px;width:300px;height:17.0px;line-height:17.0px;text-align:center;white-space:nowrap;font-size:8.5px;color:#1e1e1e;letter-spacing:-0.22px;-webkit-text-stroke:0.08px #333">New Data</div>
<div style="position:absolute;left:731.5px;top:546.8px;width:85.5px;height:9px;border-radius:4.5px;background:#fcd5cf"></div><div style="position:absolute;left:726.5px;top:542.6999999999999px;width:85.5px;height:17.2px;line-height:17.2px;text-align:center;white-space:nowrap;font-size:8.6px;color:#6e3d36;letter-spacing:-0.3px">Pending</div><svg style="left:808px;top:550.0px" width="4.6" height="2.8" viewBox="0 0 5 3"><path d="M0 0h5L2.5 3z" fill="#6e3d36"/></svg>
<div style="position:absolute;left:722.6px;top:542.8px;width:300px;height:17.0px;line-height:17.0px;text-align:center;white-space:nowrap;font-size:8.5px;color:#1e1e1e;letter-spacing:-0.22px;-webkit-text-stroke:0.08px #333">Customer</div>
<div style="position:absolute;left:818.1px;top:542.8px;width:300px;height:17.0px;line-height:17.0px;text-align:center;white-space:nowrap;font-size:8.5px;color:#1e1e1e;letter-spacing:-0.22px;-webkit-text-stroke:0.08px #333">Manager</div>
<div style="position:absolute;left:906.0999999999999px;top:542.8px;width:300px;height:17.0px;line-height:17.0px;text-align:center;white-space:nowrap;font-size:8.5px;color:#1e1e1e;letter-spacing:-0.22px;-webkit-text-stroke:0.08px #333">2024-01-17</div>
<div style="position:absolute;left:987.5999999999999px;top:542.8px;width:300px;height:17.0px;line-height:17.0px;text-align:center;white-space:nowrap;font-size:8.5px;color:#1e1e1e;letter-spacing:-0.22px;-webkit-text-stroke:0.08px #333">2024-01-19</div>
<div style="position:absolute;left:1066.6px;top:542.8px;width:300px;height:17.0px;line-height:17.0px;text-align:center;white-space:nowrap;font-size:8.5px;color:#1e1e1e;letter-spacing:-0.22px;-webkit-text-stroke:0.08px #333">45312</div>
<div style="position:absolute;left:49px;top:558px;width:1223px;height:1px;background:#dbe8d5"></div>
<div style="position:absolute;left:-64.0px;top:558.8px;width:300px;height:17.0px;line-height:17.0px;text-align:center;white-space:nowrap;font-size:8.5px;color:#1e1e1e;-webkit-text-stroke:0.08px #333">15</div>
<div style="position:absolute;left:128.5px;top:562.8px;width:72.5px;height:9px;border-radius:4.5px;background:#d9ecf0"></div><div style="position:absolute;left:123.5px;top:558.6999999999999px;width:72.5px;height:17.2px;line-height:17.2px;text-align:center;white-space:nowrap;font-size:8.6px;color:#2d4a4a;letter-spacing:-0.3px">Gamma Inc</div><svg style="left:192px;top:566.0px" width="4.6" height="2.8" viewBox="0 0 5 3"><path d="M0 0h5L2.5 3z" fill="#2d4a4a"/></svg>
<div style="position:absolute;left:109.60000000000002px;top:558.8px;width:300px;height:17.0px;line-height:17.0px;text-align:center;white-space:nowrap;font-size:8.5px;color:#1e1e1e;letter-spacing:-0.22px;-webkit-text-stroke:0.08px #333">ACCT-1015</div>
<div style="position:absolute;left:317.5px;top:562.8px;width:102.5px;height:9px;border-radius:4.5px;background:#ede6dd"></div><div style="position:absolute;left:312.5px;top:558.6999999999999px;width:102.5px;height:17.2px;line-height:17.2px;text-align:center;white-space:nowrap;font-size:8.6px;color:#5e5b56;letter-spacing:-0.3px">Current</div><svg style="left:411px;top:566.0px" width="4.6" height="2.8" viewBox="0 0 5 3"><path d="M0 0h5L2.5 3z" fill="#5e5b56"/></svg>
<div style="position:absolute;left:434.5px;top:562.8px;width:82.5px;height:9px;border-radius:4.5px;background:#c8cbf6"></div><div style="position:absolute;left:429.5px;top:558.6999999999999px;width:82.5px;height:17.2px;line-height:17.2px;text-align:center;white-space:nowrap;font-size:8.6px;color:#333b80;letter-spacing:-0.3px">Contact Update</div><svg style="left:508px;top:566.0px" width="4.6" height="2.8" viewBox="0 0 5 3"><path d="M0 0h5L2.5 3z" fill="#333b80"/></svg>
<div style="position:absolute;left:424.6px;top:558.8px;width:300px;height:17.0px;line-height:17.0px;text-align:center;white-space:nowrap;font-size:8.5px;color:#1e1e1e;letter-spacing:-0.22px;-webkit-text-stroke:0.08px #333">Old Data</div>
<div style="position:absolute;left:524.6px;top:558.8px;width:300px;height:17.0px;line-height:17.0px;text-align:center;white-space:nowrap;font-size:8.5px;color:#1e1e1e;letter-spacing:-0.22px;-webkit-text-stroke:0.08px #333">New Data</div>
<div style="position:absolute;left:731.5px;top:562.8px;width:85.5px;height:9px;border-radius:4.5px;background:#f59a83"></div><div style="position:absolute;left:726.5px;top:558.6999999999999px;width:85.5px;height:17.2px;line-height:17.2px;text-align:center;white-space:nowrap;font-size:8.6px;color:#5e1e12;letter-spacing:-0.3px">Completed</div><svg style="left:808px;top:566.0px" width="4.6" height="2.8" viewBox="0 0 5 3"><path d="M0 0h5L2.5 3z" fill="#5e1e12"/></svg>
<div style="position:absolute;left:722.6px;top:558.8px;width:300px;height:17.0px;line-height:17.0px;text-align:center;white-space:nowrap;font-size:8.5px;color:#1e1e1e;letter-spacing:-0.22px;-webkit-text-stroke:0.08px #333">Customer</div>
<div style="position:absolute;left:818.1px;top:558.8px;width:300px;height:17.0px;line-height:17.0px;text-align:center;white-space:nowrap;font-size:8.5px;color:#1e1e1e;letter-spacing:-0.22px;-webkit-text-stroke:0.08px #333">Manager</div>
<div style="position:absolute;left:906.0999999999999px;top:558.8px;width:300px;height:17.0px;line-height:17.0px;text-align:center;white-space:nowrap;font-size:8.5px;color:#1e1e1e;letter-spacing:-0.22px;-webkit-text-stroke:0.08px #333">2024-03-23</div>
<div style="position:absolute;left:987.5999999999999px;top:558.8px;width:300px;height:17.0px;line-height:17.0px;text-align:center;white-space:nowrap;font-size:8.5px;color:#1e1e1e;letter-spacing:-0.22px;-webkit-text-stroke:0.08px #333">2024-03-27</div>
<div style="position:absolute;left:1066.6px;top:558.8px;width:300px;height:17.0px;line-height:17.0px;text-align:center;white-space:nowrap;font-size:8.5px;color:#1e1e1e;letter-spacing:-0.22px;-webkit-text-stroke:0.08px #333">45379</div>
<div style="position:absolute;left:49px;top:574px;width:1223px;height:1px;background:#dbe8d5"></div>
<div style="position:absolute;left:121px;top:334px;width:1px;height:240px;background:#dfe7dc"></div>
<div style="position:absolute;left:208px;top:334px;width:1px;height:240px;background:#dfe7dc"></div>
<div style="position:absolute;left:310px;top:334px;width:1px;height:240px;background:#dfe7dc"></div>
<div style="position:absolute;left:427px;top:334px;width:1px;height:240px;background:#dfe7dc"></div>
<div style="position:absolute;left:524px;top:334px;width:1px;height:240px;background:#dfe7dc"></div>
<div style="position:absolute;left:624px;top:334px;width:1px;height:240px;background:#dfe7dc"></div>
<div style="position:absolute;left:724px;top:334px;width:1px;height:240px;background:#dfe7dc"></div>
<div style="position:absolute;left:824px;top:334px;width:1px;height:240px;background:#dfe7dc"></div>
<div style="position:absolute;left:920px;top:334px;width:1px;height:240px;background:#dfe7dc"></div>
<div style="position:absolute;left:1015px;top:334px;width:1px;height:240px;background:#dfe7dc"></div>
<div style="position:absolute;left:1096px;top:334px;width:1px;height:240px;background:#dfe7dc"></div>
<div style="position:absolute;left:1178px;top:334px;width:1px;height:240px;background:#dfe7dc"></div>
<div style="position:absolute;left:1254px;top:334px;width:1px;height:240px;background:#dfe7dc"></div>
<div style="position:absolute;left:49px;top:334px;width:1px;height:240px;background:#dfe7dc"></div>
<div style="position:absolute;left:1272px;top:548px;width:8px;height:26px;background:#f8f9fa"></div>
<svg style="left:1274px;top:552px" width="5" height="4" viewBox="0 0 5 4"><path d="M0 4h5L2.5 0z" fill="#9aa0a6"/></svg>
<svg style="left:1274px;top:565px" width="5" height="4" viewBox="0 0 5 4"><path d="M0 0h5L2.5 4z" fill="#9aa0a6"/></svg>
</body></html>
